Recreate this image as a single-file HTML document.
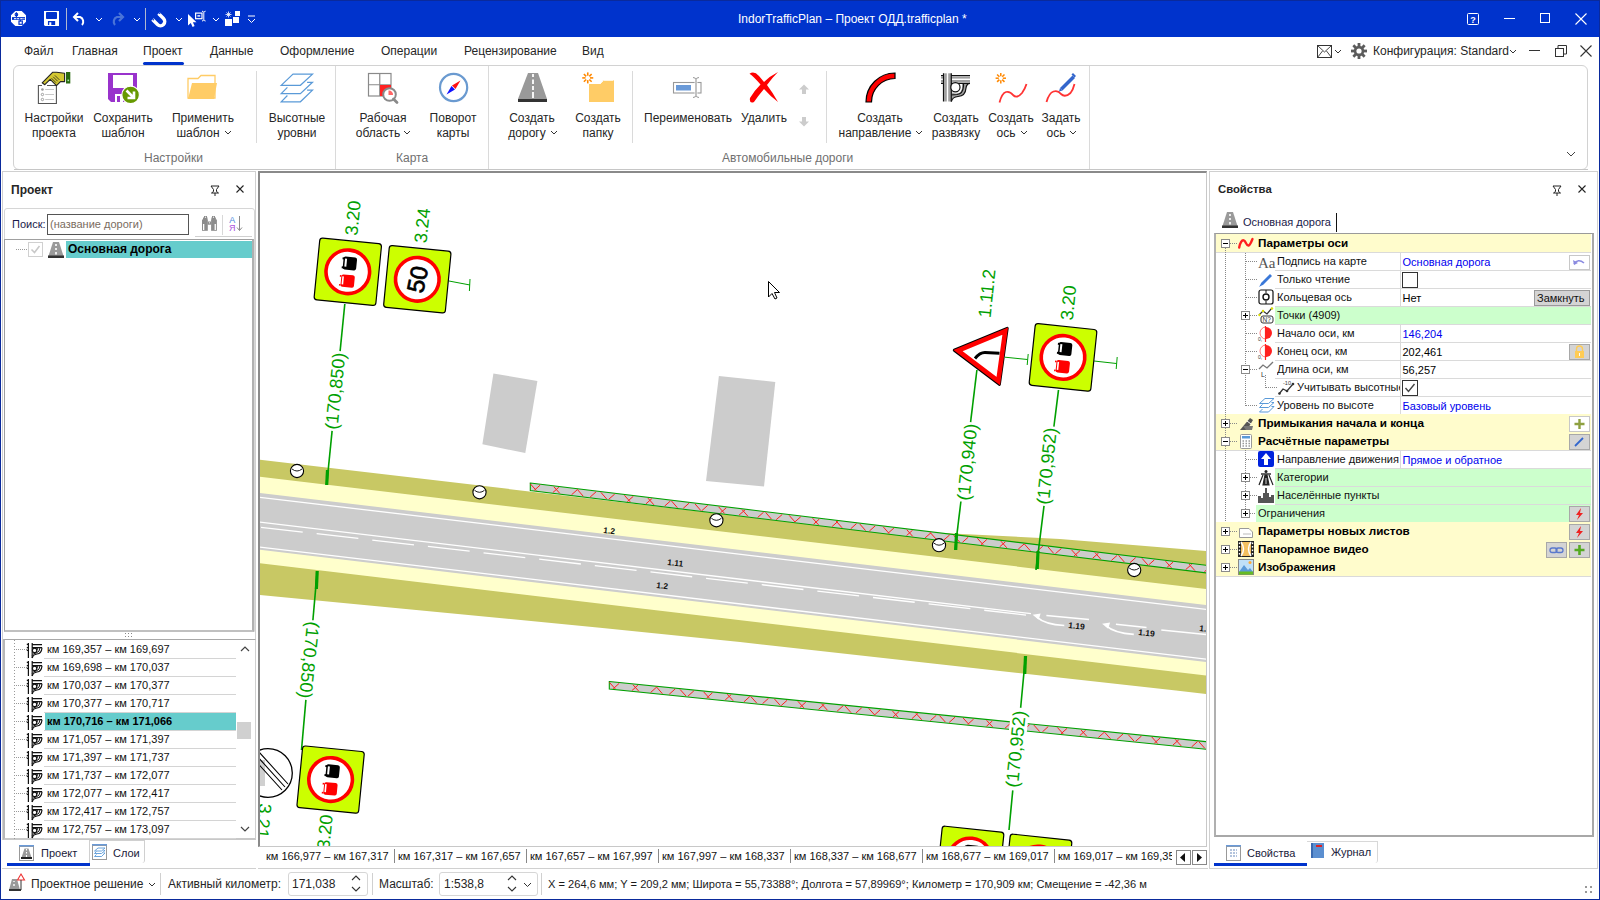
<!DOCTYPE html><html><head><meta charset="utf-8"><style>
html,body{margin:0;padding:0;width:1600px;height:900px;overflow:hidden;background:#fff;}
body{position:relative;font-family:"Liberation Sans",sans-serif;}
.t{position:absolute;white-space:nowrap;}
.r{position:absolute;}
.s{position:absolute;overflow:visible;}
</style></head><body>
<div class="r" style="left:0px;top:0px;width:1600px;height:37px;background:#0033cc;"></div>
<div class="r" style="left:0px;top:0px;width:1600px;height:1px;background:#0a2a9c;"></div>
<div class="r" style="left:0px;top:0px;width:1px;height:900px;background:#0a2a9c;"></div>
<div class="r" style="left:1599px;top:0px;width:1px;height:900px;background:#0a2a9c;"></div>
<div class="r" style="left:0px;top:899px;width:1600px;height:1px;background:#0a2a9c;"></div>
<svg class="s" style="left:11px;top:11px;" width="15" height="15" viewBox="0 0 15 15"><path d="M4.3 0 H10.7 L15 4.3 V10.7 L10.7 15 H4.3 L0 10.7 V4.3 Z" fill="#fff"/><rect x="1" y="6.1" width="13" height="2.8" fill="#0033cc"/><rect x="3" y="7.15" width="2.4" height="1.05" fill="#fff"/><rect x="6.1" y="7.15" width="2.1" height="1.05" fill="#fff"/><rect x="9.25" y="7.15" width="2.45" height="1.05" fill="#fff"/><rect x="12.4" y="7.15" width="1.1" height="1.05" fill="#fff"/><path d="M5.4 1.2 V6.1 M9.4 8.9 V10.5" stroke="#0033cc" stroke-width="1.1"/><circle cx="5.4" cy="3.5" r="1.3" fill="none" stroke="#0033cc" stroke-width="1.1"/><rect x="8" y="10" width="3.3" height="3.3" fill="none" stroke="#0033cc" stroke-width="1.2"/></svg>
<svg class="s" style="left:44px;top:11px;" width="15" height="15" viewBox="0 0 15 15"><path d="M0 0 H15 V15 H1 L0 14Z" fill="#fff"/><rect x="2" y="1" width="11" height="7" rx="0.8" fill="#0033cc"/><path d="M4.6 14 V10.6 H10.5 V14" fill="none" stroke="#0033cc" stroke-width="1.3"/><rect x="7.3" y="11" width="3" height="3" fill="#0033cc"/></svg>
<div class="r" style="left:66px;top:8px;width:1px;height:22px;background:#b0b8d0;"></div>
<svg class="s" style="left:73px;top:12px;" width="14" height="14" viewBox="0 0 14 14"><path d="M5 1 L1 5 L5 9" fill="none" stroke="#fff" stroke-width="2"/><path d="M1.5 5 H7 A5 5 0 0 1 9 13" fill="none" stroke="#fff" stroke-width="2"/></svg>
<svg class="s" style="left:95px;top:17px;" width="8" height="5" viewBox="0 0 8 5"><path d="M1 1 L4 4 L7 1" fill="none" stroke="#fff" stroke-width="1"/></svg>
<svg class="s" style="left:110px;top:12px;" width="14" height="14" viewBox="0 0 14 14"><path d="M9 1 L13 5 L9 9" fill="none" stroke="#4a74d8" stroke-width="2.2"/><path d="M12.5 5 H7 A5 5 0 0 0 5 13" fill="none" stroke="#4a74d8" stroke-width="2.2"/></svg>
<svg class="s" style="left:133px;top:17px;" width="8" height="5" viewBox="0 0 8 5"><path d="M1 1 L4 4 L7 1" fill="none" stroke="#fff" stroke-width="1"/></svg>
<div class="r" style="left:145px;top:8px;width:1px;height:22px;background:#b0b8d0;"></div>
<svg class="s" style="left:148px;top:8px;" width="22" height="22" viewBox="0 0 22 22"><path d="M4.5 11.5 L9.5 16.5 A4.24 4.24 0 0 0 15.5 10.5 L10.5 5.5" fill="none" stroke="#fff" stroke-width="3.4"/><circle cx="5.3" cy="11.7" r="0.75" fill="#0033cc"/><circle cx="11.7" cy="5.3" r="0.75" fill="#0033cc"/></svg>
<svg class="s" style="left:175px;top:17px;" width="8" height="5" viewBox="0 0 8 5"><path d="M1 1 L4 4 L7 1" fill="none" stroke="#fff" stroke-width="1"/></svg>
<svg class="s" style="left:186px;top:10px;" width="21" height="18" viewBox="0 0 21 18"><path d="M2 4 V15.5 L4.8 13 L6.6 17 L8.6 16 L6.9 12.3 L10.5 12.3Z" fill="#fff"/><rect x="9.6" y="3.1" width="6.4" height="5.6" fill="none" stroke="#fff" stroke-width="1.2"/><rect x="11.4" y="5.2" width="2.8" height="1.4" fill="#fff"/><path d="M16 1.2 Q17.4 1.2 17.8 2.4 Q18.2 1.2 19.6 1.2 M17.8 2.4 V9.8 M16 11 Q17.4 11 17.8 9.8 Q18.2 11 19.6 11" fill="none" stroke="#fff" stroke-width="1"/></svg>
<svg class="s" style="left:212px;top:17px;" width="8" height="5" viewBox="0 0 8 5"><path d="M1 1 L4 4 L7 1" fill="none" stroke="#fff" stroke-width="1"/></svg>
<svg class="s" style="left:225px;top:11px;" width="16" height="16" viewBox="0 0 16 16"><rect x="0" y="8" width="7" height="7" fill="#fff"/><rect x="8" y="6" width="6" height="6" fill="#fff"/><rect x="10" y="0" width="5" height="5" fill="#fff"/><path d="M3.5 0.5 V6.5 M0.5 3.5 H6.5 M1.5 1.5 L5.5 5.5 M5.5 1.5 L1.5 5.5" stroke="#fff" stroke-width="0.8"/></svg>
<svg class="s" style="left:247px;top:15px;" width="9" height="9" viewBox="0 0 9 9"><path d="M1 1 H8" stroke="#fff"/><path d="M1 4 L4.5 7.5 L8 4" fill="none" stroke="#fff"/></svg>
<div class="t" style="left:738px;top:13.00px;font-size:12px;line-height:12px;color:#ffffff;">IndorTrafficPlan – Проект ОДД.trafficplan *</div>
<svg class="s" style="left:1467px;top:13px;" width="12" height="12" viewBox="0 0 12 12"><rect x="0.5" y="0.5" width="11" height="11" fill="none" stroke="#fff" rx="1"/><text x="6" y="9.5" font-size="9" font-family="Liberation Sans" font-weight="700" fill="#fff" text-anchor="middle">?</text></svg>
<div class="r" style="left:1504px;top:18px;width:11px;height:1px;background:#fff;"></div>
<div class="r" style="left:1540px;top:13px;width:10px;height:10px;box-sizing:border-box;border:1px solid #fff;"></div>
<svg class="s" style="left:1575px;top:13px;" width="12" height="12" viewBox="0 0 12 12"><path d="M0.5 0.5 L11.5 11.5 M11.5 0.5 L0.5 11.5" stroke="#fff" stroke-width="1.1"/></svg>
<div class="t" style="left:24px;top:45.00px;font-size:12px;line-height:12px;color:#262626;">Файл</div>
<div class="t" style="left:72px;top:45.00px;font-size:12px;line-height:12px;color:#262626;">Главная</div>
<div class="t" style="left:143px;top:45.00px;font-size:12px;line-height:12px;color:#262626;">Проект</div>
<div class="t" style="left:210px;top:45.00px;font-size:12px;line-height:12px;color:#262626;">Данные</div>
<div class="t" style="left:280px;top:45.00px;font-size:12px;line-height:12px;color:#262626;">Оформление</div>
<div class="t" style="left:381px;top:45.00px;font-size:12px;line-height:12px;color:#262626;">Операции</div>
<div class="t" style="left:464px;top:45.00px;font-size:12px;line-height:12px;color:#262626;">Рецензирование</div>
<div class="t" style="left:582px;top:45.00px;font-size:12px;line-height:12px;color:#262626;">Вид</div>
<div class="r" style="left:143px;top:62px;width:41px;height:3px;background:#0033cc;border-radius:1.5px;"></div>
<svg class="s" style="left:1317px;top:45px;" width="15" height="13" viewBox="0 0 15 13"><rect x="0.5" y="0.5" width="14" height="12" fill="none" stroke="#333"/><path d="M0.5 0.5 L7.5 7 L14.5 0.5 M0.5 12.5 L5.5 6 M14.5 12.5 L9.5 6" fill="none" stroke="#333" stroke-width="0.9"/></svg>
<svg class="s" style="left:1334px;top:48.5px;" width="8" height="5" viewBox="0 0 8 5"><path d="M1 1 L4 4 L7 1" fill="none" stroke="#333" stroke-width="1"/></svg>
<svg class="s" style="left:1350.5px;top:42.5px;" width="16" height="16" viewBox="0 0 16 16"><g fill="#5c5c5c"><circle cx="8" cy="8" r="5.2"/><rect x="6.6" y="0" width="2.8" height="4" transform="rotate(0 8 8)"/><rect x="6.6" y="0" width="2.8" height="4" transform="rotate(45 8 8)"/><rect x="6.6" y="0" width="2.8" height="4" transform="rotate(90 8 8)"/><rect x="6.6" y="0" width="2.8" height="4" transform="rotate(135 8 8)"/><rect x="6.6" y="0" width="2.8" height="4" transform="rotate(180 8 8)"/><rect x="6.6" y="0" width="2.8" height="4" transform="rotate(225 8 8)"/><rect x="6.6" y="0" width="2.8" height="4" transform="rotate(270 8 8)"/><rect x="6.6" y="0" width="2.8" height="4" transform="rotate(315 8 8)"/></g><circle cx="8" cy="8" r="2.6" fill="#fff"/></svg>
<div class="t" style="left:1373px;top:45.00px;font-size:12px;line-height:12px;color:#262626;">Конфигурация: Standard</div>
<svg class="s" style="left:1509px;top:49px;" width="8" height="5" viewBox="0 0 8 5"><path d="M1 1 L4 4 L7 1" fill="none" stroke="#333" stroke-width="1"/></svg>
<div class="r" style="left:1529px;top:50px;width:11px;height:1px;background:#333;"></div>
<svg class="s" style="left:1555px;top:45px;" width="12" height="12" viewBox="0 0 12 12"><rect x="0.5" y="3.5" width="8" height="8" fill="none" stroke="#333"/><path d="M3 3.5 V0.5 H11.5 V9 H8.5" fill="none" stroke="#333"/></svg>
<svg class="s" style="left:1580px;top:45px;" width="12" height="12" viewBox="0 0 12 12"><path d="M0.5 0.5 L11.5 11.5 M11.5 0.5 L0.5 11.5" stroke="#333" stroke-width="1.1"/></svg>
<div class="r" style="left:13px;top:65px;width:1575px;height:105px;box-sizing:border-box;border:1px solid #d2d2d2;border-radius:6px;"></div>
<div class="r" style="left:14px;top:169px;width:1574px;height:1px;background:#c6c6c6;"></div>
<div class="t" style="left:144px;top:152.00px;font-size:12px;line-height:12px;color:#707070;">Настройки</div>
<div class="t" style="left:396px;top:152.00px;font-size:12px;line-height:12px;color:#707070;">Карта</div>
<div class="t" style="left:722px;top:152.00px;font-size:12px;line-height:12px;color:#707070;">Автомобильные дороги</div>
<div class="r" style="left:256px;top:71px;width:1px;height:72px;background:#dadada;"></div>
<div class="r" style="left:632px;top:71px;width:1px;height:72px;background:#dadada;"></div>
<div class="r" style="left:826px;top:71px;width:1px;height:72px;background:#dadada;"></div>
<div class="r" style="left:335px;top:66px;width:1px;height:103px;background:#dadada;"></div>
<div class="r" style="left:488px;top:66px;width:1px;height:103px;background:#dadada;"></div>
<div class="r" style="left:1089px;top:66px;width:1px;height:103px;background:#dadada;"></div>
<div class="t" style="left:54px;top:112.00px;font-size:12px;line-height:12px;color:#262626;transform:translateX(-50%);">Настройки</div>
<div class="t" style="left:54px;top:127.00px;font-size:12px;line-height:12px;color:#262626;transform:translateX(-50%);">проекта</div>
<div class="t" style="left:123px;top:112.00px;font-size:12px;line-height:12px;color:#262626;transform:translateX(-50%);">Сохранить</div>
<div class="t" style="left:123px;top:127.00px;font-size:12px;line-height:12px;color:#262626;transform:translateX(-50%);">шаблон</div>
<div class="t" style="left:203px;top:112.00px;font-size:12px;line-height:12px;color:#262626;transform:translateX(-50%);">Применить</div>
<div class="t" style="left:198px;top:127.00px;font-size:12px;line-height:12px;color:#262626;transform:translateX(-50%);">шаблон</div>
<svg class="s" style="left:224px;top:130px;" width="8" height="5" viewBox="0 0 8 5"><path d="M1 1 L4 4 L7 1" fill="none" stroke="#333" stroke-width="1"/></svg>
<div class="t" style="left:297px;top:112.00px;font-size:12px;line-height:12px;color:#262626;transform:translateX(-50%);">Высотные</div>
<div class="t" style="left:297px;top:127.00px;font-size:12px;line-height:12px;color:#262626;transform:translateX(-50%);">уровни</div>
<div class="t" style="left:383px;top:112.00px;font-size:12px;line-height:12px;color:#262626;transform:translateX(-50%);">Рабочая</div>
<div class="t" style="left:378px;top:127.00px;font-size:12px;line-height:12px;color:#262626;transform:translateX(-50%);">область</div>
<svg class="s" style="left:403px;top:130px;" width="8" height="5" viewBox="0 0 8 5"><path d="M1 1 L4 4 L7 1" fill="none" stroke="#333" stroke-width="1"/></svg>
<div class="t" style="left:453px;top:112.00px;font-size:12px;line-height:12px;color:#262626;transform:translateX(-50%);">Поворот</div>
<div class="t" style="left:453px;top:127.00px;font-size:12px;line-height:12px;color:#262626;transform:translateX(-50%);">карты</div>
<div class="t" style="left:532px;top:112.00px;font-size:12px;line-height:12px;color:#262626;transform:translateX(-50%);">Создать</div>
<div class="t" style="left:527px;top:127.00px;font-size:12px;line-height:12px;color:#262626;transform:translateX(-50%);">дорогу</div>
<svg class="s" style="left:550px;top:130px;" width="8" height="5" viewBox="0 0 8 5"><path d="M1 1 L4 4 L7 1" fill="none" stroke="#333" stroke-width="1"/></svg>
<div class="t" style="left:598px;top:112.00px;font-size:12px;line-height:12px;color:#262626;transform:translateX(-50%);">Создать</div>
<div class="t" style="left:598px;top:127.00px;font-size:12px;line-height:12px;color:#262626;transform:translateX(-50%);">папку</div>
<div class="t" style="left:688px;top:112.00px;font-size:12px;line-height:12px;color:#262626;transform:translateX(-50%);">Переименовать</div>
<div class="t" style="left:764px;top:112.00px;font-size:12px;line-height:12px;color:#262626;transform:translateX(-50%);">Удалить</div>
<div class="t" style="left:880px;top:112.00px;font-size:12px;line-height:12px;color:#262626;transform:translateX(-50%);">Создать</div>
<div class="t" style="left:875px;top:127.00px;font-size:12px;line-height:12px;color:#262626;transform:translateX(-50%);">направление</div>
<svg class="s" style="left:915px;top:130px;" width="8" height="5" viewBox="0 0 8 5"><path d="M1 1 L4 4 L7 1" fill="none" stroke="#333" stroke-width="1"/></svg>
<div class="t" style="left:956px;top:112.00px;font-size:12px;line-height:12px;color:#262626;transform:translateX(-50%);">Создать</div>
<div class="t" style="left:956px;top:127.00px;font-size:12px;line-height:12px;color:#262626;transform:translateX(-50%);">развязку</div>
<div class="t" style="left:1011px;top:112.00px;font-size:12px;line-height:12px;color:#262626;transform:translateX(-50%);">Создать</div>
<div class="t" style="left:1006px;top:127.00px;font-size:12px;line-height:12px;color:#262626;transform:translateX(-50%);">ось</div>
<svg class="s" style="left:1020px;top:130px;" width="8" height="5" viewBox="0 0 8 5"><path d="M1 1 L4 4 L7 1" fill="none" stroke="#333" stroke-width="1"/></svg>
<div class="t" style="left:1061px;top:112.00px;font-size:12px;line-height:12px;color:#262626;transform:translateX(-50%);">Задать</div>
<div class="t" style="left:1056px;top:127.00px;font-size:12px;line-height:12px;color:#262626;transform:translateX(-50%);">ось</div>
<svg class="s" style="left:1069px;top:130px;" width="8" height="5" viewBox="0 0 8 5"><path d="M1 1 L4 4 L7 1" fill="none" stroke="#333" stroke-width="1"/></svg>
<svg class="s" style="left:1566px;top:151px;" width="10" height="6" viewBox="0 0 10 6"><path d="M1 1 L5 5 L9 1" fill="none" stroke="#444" stroke-width="1"/></svg>
<svg class="s" style="left:36px;top:70px;" width="36" height="36" viewBox="0 0 36 36"><rect x="2.4" y="15.5" width="18" height="18" fill="#fff"/><path d="M6 15.5 H2.4 V33.5 H20.4 V15.5 H11" fill="none" stroke="#555" stroke-width="1.1"/><circle cx="6.45" cy="19.5" r="1.3" fill="#999"/><circle cx="6.45" cy="24.5" r="1.2" fill="none" stroke="#888" stroke-width="0.8"/><circle cx="6.45" cy="29.5" r="1.2" fill="none" stroke="#888" stroke-width="0.8"/><path d="M9.2 19.5 H18 M9.2 24.5 H18 M9.2 29.5 H18" stroke="#c8c8c8" stroke-width="1"/><path d="M6.2 12.8 L16.8 2.2 H20.5 L28.6 3.3 V11.6 H24.5 L20.5 15.6 L14.2 9.3 L8.8 14.7Z" fill="#d4c832" stroke="#222" stroke-width="1.1" stroke-linejoin="round"/><path d="M15.5 8.2 L20 12.7 M17.2 6.8 L21.7 11.3 M18.9 5.4 L23.4 9.9" stroke="#222" stroke-width="0.8"/><rect x="30" y="2" width="4.3" height="11.5" fill="#2a6a10"/><rect x="31.5" y="9.6" width="1.6" height="1.6" fill="#aeeaae"/></svg>
<svg class="s" style="left:106px;top:71px;" width="36" height="36" viewBox="0 0 36 36"><path d="M2 2 H31 V24 L26 31 H5 L2 28Z" fill="#9933cc"/><rect x="7" y="4" width="20" height="13" fill="#fff"/><rect x="9" y="23" width="8" height="8" fill="#fff"/><rect x="11" y="25" width="3" height="6" fill="#9933cc"/><circle cx="24.6" cy="23.9" r="8.8" fill="#669900" stroke="#fff" stroke-width="1.2"/><path d="M20.5 19.5 L27.5 26.5 M28 20.5 V27 H21.5" fill="none" stroke="#fff" stroke-width="2.6"/></svg>
<svg class="s" style="left:186px;top:74px;" width="34" height="28" viewBox="0 0 34 28"><path d="M2 4.5 H12 L15 1.5 H29 V24 H2Z" fill="#fff" stroke="#ffcc66" stroke-width="1.3"/><path d="M2 25 L6 9 H31 L28 25Z" fill="#ffcc66"/></svg>
<svg class="s" style="left:280px;top:73px;" width="34" height="30" viewBox="0 0 34 30"><g fill="none" stroke="#5a9ad8" stroke-width="1.2"><path d="M13 1.1 H32.5 L20.4 12.3 H1.2Z"/><path d="M27.1 9.3 H32.5 L20.4 20.6 H1.2 L7.4 14.4"/><path d="M27.1 17.2 H32.5 L20.4 28.8 H1.2 L7.4 22.5"/></g></svg>
<svg class="s" style="left:366px;top:71px;" width="34" height="34" viewBox="0 0 34 34"><g fill="none" stroke="#8a8a8a" stroke-width="1.2"><rect x="2.5" y="2.5" width="22.5" height="22.5"/><path d="M13.75 2.5 V25 M2.5 13.75 H25"/></g><rect x="14" y="14" width="11" height="11" fill="#ff2222"/><circle cx="23.5" cy="23.5" r="6.3" fill="#fff" stroke="#8a8a8a" stroke-width="2"/><path d="M22.5 19.5 A4 4 0 0 1 27 24 H22.5Z" fill="#ff6666"/><path d="M27.5 28 L31 31.5" stroke="#8a8a8a" stroke-width="2.8" stroke-linecap="round"/></svg>
<svg class="s" style="left:437px;top:71px;" width="34" height="34" viewBox="0 0 34 34"><circle cx="16.6" cy="16.5" r="13.6" fill="#fff" stroke="#6a9ad0" stroke-width="2.2"/><path d="M23.5 9.5 L18.5 18 L15 14.5Z" fill="#ff1111"/><path d="M9.5 23.5 L14.5 15 L18 18.5Z" fill="#1111ff"/></svg>
<svg class="s" style="left:516px;top:71px;" width="34" height="34" viewBox="0 0 34 34"><path d="M12 2 H22 L31 28 H2Z" fill="#999"/><rect x="2" y="28" width="29" height="3" fill="#333"/><path d="M17 3 V6 M17 8.5 V13 M17 15 V19 M17 21 V27" stroke="#fff" stroke-width="1.8"/></svg>
<svg class="s" style="left:580px;top:71px;" width="36" height="34" viewBox="0 0 36 34"><g stroke="#ff8800" stroke-width="1.6"><line x1="9.95" y1="6.90" x2="13.25" y2="6.90"/><line x1="9.31" y1="8.46" x2="11.64" y2="10.79"/><line x1="7.75" y1="9.10" x2="7.75" y2="12.40"/><line x1="6.19" y1="8.46" x2="3.86" y2="10.79"/><line x1="5.55" y1="6.90" x2="2.25" y2="6.90"/><line x1="6.19" y1="5.34" x2="3.86" y2="3.01"/><line x1="7.75" y1="4.70" x2="7.75" y2="1.40"/><line x1="9.31" y1="5.34" x2="11.64" y2="3.01"/></g><path d="M9 13 H20 L23.5 9 H34 V31 H9Z" fill="#ffcc66"/><path d="M20 13 L23.5 9.5 H33.5" fill="none" stroke="#fff" stroke-width="0.8"/></svg>
<svg class="s" style="left:671px;top:76px;" width="34" height="24" viewBox="0 0 34 24"><rect x="2.5" y="6.5" width="27.5" height="10.5" fill="#fff" stroke="#999" stroke-width="1.1"/><rect x="5" y="9" width="15" height="5.5" fill="#6a9ad8"/><path d="M22 1.5 Q25 1.5 25 4 V19 Q25 21.5 22 21.5 M28 1.5 Q25 1.5 25 4 V19 Q25 21.5 28 21.5" fill="none" stroke="#999" stroke-width="1"/><rect x="23.6" y="3" width="2.8" height="17" fill="#fff"/><path d="M25 3 V20" stroke="#999" stroke-width="1.2"/></svg>
<svg class="s" style="left:746px;top:71px;" width="34" height="34" viewBox="0 0 34 34"><path d="M3.5 2.8 Q8 -0.5 13 5 Q16 8.5 18 11 Q24 5 32 1 Q26 7 21 14 Q27 22 32 31 Q25 26 18 18 Q12 25 8 31 Q3 33 4 27 Q8 20 14.5 13.5 Q8 6 3.5 2.8Z" fill="#ff0000"/></svg>
<svg class="s" style="left:799px;top:84px;" width="11" height="11" viewBox="0 0 11 11"><path d="M5 0.5 L10 5.5 H7 V10 H3 V5.5 H0Z" fill="#cccccc"/></svg>
<svg class="s" style="left:799px;top:116px;" width="11" height="11" viewBox="0 0 11 11"><path d="M5 10.5 L10 5.5 H7 V1 H3 V5.5 H0Z" fill="#cccccc"/></svg>
<svg class="s" style="left:864px;top:71px;" width="34" height="34" viewBox="0 0 34 34"><path d="M2 31 A29 29 0 0 1 31 2 V7.5 A23.5 23.5 0 0 0 7.5 31Z" fill="#ff0000" stroke="#000" stroke-width="1.2"/></svg>
<svg class="s" style="left:936px;top:68px;" width="40" height="38" viewBox="0 0 40 38"><rect x="8.2" y="5.3" width="2.6" height="28.2" fill="#a0a0a0"/><rect x="12.2" y="5.3" width="2.8" height="28.2" fill="#a0a0a0"/><rect x="5" y="8.2" width="2.5" height="2.4" fill="#a0a0a0"/><rect x="5" y="12" width="2.5" height="2.3" fill="#a0a0a0"/><rect x="15.5" y="8.2" width="18.5" height="2.4" fill="#a0a0a0"/><rect x="15.5" y="12" width="18.5" height="2.3" fill="#a0a0a0"/><path d="M15.3 33.5 Q16.5 29 22 28.5 Q29.5 28 30 20 Q30.5 15.5 34 15.3 H26 V20 Q25.5 25.5 20 25.5 Q15.3 25.5 15.3 22Z" fill="#a0a0a0"/><g fill="none" stroke="#111" stroke-width="1.2"><path d="M7.5 5.3 V33.5 M15.3 5.3 V33.5 M5 7.5 H7.5 M15.3 7.5 H34 M5 15.3 H7.5 M15.3 15.3 H34"/><circle cx="19.4" cy="19.2" r="4.6" fill="#fff"/><path d="M15.3 33.5 Q16.5 29 22 28.5 Q29.5 28 30 20 Q30.5 15.5 34 15.3"/><path d="M15.3 27 Q17 26.5 21 26.5 Q27 26 27.5 18 V15.3"/></g></svg>
<svg class="s" style="left:993px;top:71px;" width="36" height="34" viewBox="0 0 36 34"><g stroke="#ff8800" stroke-width="1.5"><line x1="9.80" y1="7.20" x2="13.00" y2="7.20"/><line x1="9.21" y1="8.61" x2="11.48" y2="10.88"/><line x1="7.80" y1="9.20" x2="7.80" y2="12.40"/><line x1="6.39" y1="8.61" x2="4.12" y2="10.88"/><line x1="5.80" y1="7.20" x2="2.60" y2="7.20"/><line x1="6.39" y1="5.79" x2="4.12" y2="3.52"/><line x1="7.80" y1="5.20" x2="7.80" y2="2.00"/><line x1="9.21" y1="5.79" x2="11.48" y2="3.52"/></g><path d="M6.5 31.5 Q9 22 13 21 Q17 20 20 24 Q24 28 29 22 Q32 18 33.5 13" fill="none" stroke="#ff3333" stroke-width="1.8"/></svg>
<svg class="s" style="left:1044px;top:71px;" width="34" height="34" viewBox="0 0 34 34"><path d="M2.5 31 Q5 22 9.5 20.5 Q14 19 17 23 Q21 27 26.5 22 Q29 19 30.5 13" fill="none" stroke="#ff3333" stroke-width="1.8"/><path d="M16 17 L28.5 4.5 L31 7 L18.5 19.5Z" fill="#3366cc"/><path d="M16 17 L15 20.5 L18.5 19.5Z" fill="#3366cc"/><path d="M27.5 3.5 L29 2 L32 5 L30.5 6.5Z" fill="#3366cc"/></svg>
<div class="r" style="left:2px;top:171px;width:254px;height:698px;box-sizing:border-box;border:1px solid #d0d0d0;border-bottom:none;"></div>
<div class="t" style="left:11px;top:184.00px;font-size:12px;line-height:12px;color:#262626;font-weight:700;">Проект</div>
<svg class="s" style="left:210px;top:185px;" width="10" height="11" viewBox="0 0 10 11"><path d="M1 1 H9 L6.5 4.5 V6.5 L8.5 8 H1.5 L3.5 6.5 V4.5Z M5 8 V11" fill="none" stroke="#222" stroke-width="1"/></svg>
<svg class="s" style="left:236px;top:185px;" width="8" height="8" viewBox="0 0 8 8"><path d="M0.5 0.5 L7.5 7.5 M7.5 0.5 L0.5 7.5" stroke="#222" stroke-width="1.1"/></svg>
<div class="r" style="left:4px;top:208px;width:251px;height:424px;box-sizing:border-box;border:1px solid #d6d6d6;border-radius:3px 3px 0 0;"></div>
<div class="t" style="left:12px;top:218.50px;font-size:11px;line-height:11px;color:#1a1a4a;">Поиск:</div>
<div class="r" style="left:47px;top:214px;width:142px;height:21px;background:#fff;box-sizing:border-box;border:1px solid #555;"></div>
<div class="t" style="left:50px;top:218.50px;font-size:11px;line-height:11px;color:#7a6c60;">(название дороги)</div>
<svg class="s" style="left:201px;top:215px;" width="17" height="17" viewBox="0 0 17 17"><g fill="#8c8c8c"><rect x="1" y="4.5" width="5.8" height="11.3"/><rect x="2" y="2.5" width="4.5" height="3"/><rect x="3" y="1" width="3" height="2"/><rect x="10.1" y="4.5" width="5.8" height="11.3"/><rect x="10.4" y="2.5" width="4.5" height="3"/><rect x="11" y="1" width="3" height="2"/><rect x="6.7" y="6.5" width="3.5" height="3.2"/></g><rect x="2" y="9" width="1.3" height="6" fill="#fff"/><rect x="13.6" y="9" width="1.3" height="6" fill="#fff"/><circle cx="4.5" cy="2.2" r="0.6" fill="#fff"/><circle cx="12.5" cy="2.2" r="0.6" fill="#fff"/><circle cx="8.5" cy="7.8" r="0.6" fill="#fff"/></svg>
<div class="r" style="left:222px;top:215px;width:1px;height:20px;background:#d8d8d8;"></div>
<div class="r" style="left:195px;top:236px;width:57px;height:1px;background:#d0d0d0;"></div>
<svg class="s" style="left:229px;top:215px;" width="15" height="17" viewBox="0 0 15 17"><text x="3.3" y="7.8" font-size="9" font-family="Liberation Sans" fill="#4a88dd" text-anchor="middle">A</text><text x="3.3" y="15.8" font-size="9" font-family="Liberation Sans" fill="#aa55dd" text-anchor="middle">Я</text><path d="M10.5 1 V15.5 M8 12.5 L10.5 15.5 L13 12.5" fill="none" stroke="#8a8a8a" stroke-width="1"/></svg>
<div class="r" style="left:4px;top:239px;width:250px;height:393px;box-sizing:border-box;border:1px solid #a0a0a0;border-right:2px solid #b0b0b0;border-bottom:2px solid #c0c0c0;"></div>
<svg class="s" style="left:16px;top:249px;" width="12" height="1" viewBox="0 0 12 1"><path d="M0 0.5 H12" stroke="#999" stroke-dasharray="1 1"/></svg>
<div class="r" style="left:28px;top:242px;width:15px;height:15px;background:#fff;box-sizing:border-box;border:1px solid #d0d0d0;"></div>
<svg class="s" style="left:30px;top:244px;" width="11" height="11" viewBox="0 0 11 11"><path d="M1.5 5.5 L4.5 8.5 L9.5 2" fill="none" stroke="#c8c8c8" stroke-width="1.6"/></svg>
<svg class="s" style="left:48px;top:242px;" width="16" height="16" viewBox="0 0 16 16"><path d="M5 0 H11 L15.5 14 H0.5Z" fill="#9a9a9a"/><rect x="0" y="13.5" width="16" height="2.5" fill="#333"/><path d="M8 2 V4 M8 6 V8 M8 10 V12.5" stroke="#fff" stroke-width="1.6"/></svg>
<div class="r" style="left:66px;top:241px;width:186px;height:17px;background:#66cccc;"></div>
<div class="t" style="left:68px;top:243.00px;font-size:12px;line-height:12px;color:#000;font-weight:700;">Основная дорога</div>
<svg class="s" style="left:124px;top:632px;" width="10" height="6" viewBox="0 0 10 6"><rect x="1" y="1" width="1" height="1" fill="#888"/><rect x="1" y="4" width="1" height="1" fill="#888"/><rect x="4" y="1" width="1" height="1" fill="#888"/><rect x="4" y="4" width="1" height="1" fill="#888"/><rect x="7" y="1" width="1" height="1" fill="#888"/><rect x="7" y="4" width="1" height="1" fill="#888"/></svg>
<div class="r" style="left:3px;top:639px;width:253px;height:201px;box-sizing:border-box;border:1px solid #a8a8a8;border-left:2px solid #b8b8b8;border-bottom:2px solid #c8c8c8;border-right:1px solid #d0d0d0;"></div>
<svg class="s" style="left:14px;top:640px;" width="1" height="200" viewBox="0 0 1 200"><path d="M0.5 0 V200" stroke="#999" stroke-dasharray="1 2"/></svg>
<svg class="s" style="left:16px;top:649px;" width="11" height="1" viewBox="0 0 11 1"><path d="M0 0.5 H11" stroke="#999" stroke-dasharray="1 1"/></svg>
<svg class="s" style="left:26px;top:642px;" width="17" height="17" viewBox="0 0 17 17"><g fill="none" stroke="#111" stroke-width="1.2"><path d="M2.4 1 V16 M6.2 1 V16 M0.8 2.3 H2.4 M0.8 5.6 H2.4 M0.8 8.4 H2.4 M6.2 2.6 H16 M6.2 5.7 H16"/><circle cx="8.6" cy="8.4" r="2.2"/><path d="M6.2 16 Q7 12.5 11 12 Q15.5 11.5 16 5.7"/><path d="M6.2 13.4 Q7.5 11.2 10.5 10.8 Q13.6 10.2 14 5.7" stroke-width="1"/><path d="M10.8 8.4 Q11.5 6.5 12 5.7" stroke-width="1"/></g><rect x="6.8" y="11" width="1.2" height="2" fill="#777"/></svg>
<div class="t" style="left:47px;top:643.50px;font-size:11px;line-height:11px;color:#111;">км 169,357 – км 169,697</div>
<div class="r" style="left:44px;top:658px;width:192px;height:1px;background:#d4d4d4;"></div>
<svg class="s" style="left:16px;top:667px;" width="11" height="1" viewBox="0 0 11 1"><path d="M0 0.5 H11" stroke="#999" stroke-dasharray="1 1"/></svg>
<svg class="s" style="left:26px;top:660px;" width="17" height="17" viewBox="0 0 17 17"><g fill="none" stroke="#111" stroke-width="1.2"><path d="M2.4 1 V16 M6.2 1 V16 M0.8 2.3 H2.4 M0.8 5.6 H2.4 M0.8 8.4 H2.4 M6.2 2.6 H16 M6.2 5.7 H16"/><circle cx="8.6" cy="8.4" r="2.2"/><path d="M6.2 16 Q7 12.5 11 12 Q15.5 11.5 16 5.7"/><path d="M6.2 13.4 Q7.5 11.2 10.5 10.8 Q13.6 10.2 14 5.7" stroke-width="1"/><path d="M10.8 8.4 Q11.5 6.5 12 5.7" stroke-width="1"/></g><rect x="6.8" y="11" width="1.2" height="2" fill="#777"/></svg>
<div class="t" style="left:47px;top:661.50px;font-size:11px;line-height:11px;color:#111;">км 169,698 – км 170,037</div>
<div class="r" style="left:44px;top:676px;width:192px;height:1px;background:#d4d4d4;"></div>
<svg class="s" style="left:16px;top:685px;" width="11" height="1" viewBox="0 0 11 1"><path d="M0 0.5 H11" stroke="#999" stroke-dasharray="1 1"/></svg>
<svg class="s" style="left:26px;top:678px;" width="17" height="17" viewBox="0 0 17 17"><g fill="none" stroke="#111" stroke-width="1.2"><path d="M2.4 1 V16 M6.2 1 V16 M0.8 2.3 H2.4 M0.8 5.6 H2.4 M0.8 8.4 H2.4 M6.2 2.6 H16 M6.2 5.7 H16"/><circle cx="8.6" cy="8.4" r="2.2"/><path d="M6.2 16 Q7 12.5 11 12 Q15.5 11.5 16 5.7"/><path d="M6.2 13.4 Q7.5 11.2 10.5 10.8 Q13.6 10.2 14 5.7" stroke-width="1"/><path d="M10.8 8.4 Q11.5 6.5 12 5.7" stroke-width="1"/></g><rect x="6.8" y="11" width="1.2" height="2" fill="#777"/></svg>
<div class="t" style="left:47px;top:679.50px;font-size:11px;line-height:11px;color:#111;">км 170,037 – км 170,377</div>
<div class="r" style="left:44px;top:694px;width:192px;height:1px;background:#d4d4d4;"></div>
<svg class="s" style="left:16px;top:703px;" width="11" height="1" viewBox="0 0 11 1"><path d="M0 0.5 H11" stroke="#999" stroke-dasharray="1 1"/></svg>
<svg class="s" style="left:26px;top:696px;" width="17" height="17" viewBox="0 0 17 17"><g fill="none" stroke="#111" stroke-width="1.2"><path d="M2.4 1 V16 M6.2 1 V16 M0.8 2.3 H2.4 M0.8 5.6 H2.4 M0.8 8.4 H2.4 M6.2 2.6 H16 M6.2 5.7 H16"/><circle cx="8.6" cy="8.4" r="2.2"/><path d="M6.2 16 Q7 12.5 11 12 Q15.5 11.5 16 5.7"/><path d="M6.2 13.4 Q7.5 11.2 10.5 10.8 Q13.6 10.2 14 5.7" stroke-width="1"/><path d="M10.8 8.4 Q11.5 6.5 12 5.7" stroke-width="1"/></g><rect x="6.8" y="11" width="1.2" height="2" fill="#777"/></svg>
<div class="t" style="left:47px;top:697.50px;font-size:11px;line-height:11px;color:#111;">км 170,377 – км 170,717</div>
<div class="r" style="left:44px;top:712px;width:192px;height:1px;background:#d4d4d4;"></div>
<svg class="s" style="left:16px;top:721px;" width="11" height="1" viewBox="0 0 11 1"><path d="M0 0.5 H11" stroke="#999" stroke-dasharray="1 1"/></svg>
<svg class="s" style="left:26px;top:714px;" width="17" height="17" viewBox="0 0 17 17"><g fill="none" stroke="#111" stroke-width="1.2"><path d="M2.4 1 V16 M6.2 1 V16 M0.8 2.3 H2.4 M0.8 5.6 H2.4 M0.8 8.4 H2.4 M6.2 2.6 H16 M6.2 5.7 H16"/><circle cx="8.6" cy="8.4" r="2.2"/><path d="M6.2 16 Q7 12.5 11 12 Q15.5 11.5 16 5.7"/><path d="M6.2 13.4 Q7.5 11.2 10.5 10.8 Q13.6 10.2 14 5.7" stroke-width="1"/><path d="M10.8 8.4 Q11.5 6.5 12 5.7" stroke-width="1"/></g><rect x="6.8" y="11" width="1.2" height="2" fill="#777"/></svg>
<div class="r" style="left:45px;top:713px;width:191px;height:17px;background:#66cccc;"></div>
<div class="t" style="left:47px;top:715.50px;font-size:11px;line-height:11px;color:#000;font-weight:700;">км 170,716 – км 171,066</div>
<div class="r" style="left:44px;top:730px;width:192px;height:1px;background:#d4d4d4;"></div>
<svg class="s" style="left:16px;top:739px;" width="11" height="1" viewBox="0 0 11 1"><path d="M0 0.5 H11" stroke="#999" stroke-dasharray="1 1"/></svg>
<svg class="s" style="left:26px;top:732px;" width="17" height="17" viewBox="0 0 17 17"><g fill="none" stroke="#111" stroke-width="1.2"><path d="M2.4 1 V16 M6.2 1 V16 M0.8 2.3 H2.4 M0.8 5.6 H2.4 M0.8 8.4 H2.4 M6.2 2.6 H16 M6.2 5.7 H16"/><circle cx="8.6" cy="8.4" r="2.2"/><path d="M6.2 16 Q7 12.5 11 12 Q15.5 11.5 16 5.7"/><path d="M6.2 13.4 Q7.5 11.2 10.5 10.8 Q13.6 10.2 14 5.7" stroke-width="1"/><path d="M10.8 8.4 Q11.5 6.5 12 5.7" stroke-width="1"/></g><rect x="6.8" y="11" width="1.2" height="2" fill="#777"/></svg>
<div class="t" style="left:47px;top:733.50px;font-size:11px;line-height:11px;color:#111;">км 171,057 – км 171,397</div>
<div class="r" style="left:44px;top:748px;width:192px;height:1px;background:#d4d4d4;"></div>
<svg class="s" style="left:16px;top:757px;" width="11" height="1" viewBox="0 0 11 1"><path d="M0 0.5 H11" stroke="#999" stroke-dasharray="1 1"/></svg>
<svg class="s" style="left:26px;top:750px;" width="17" height="17" viewBox="0 0 17 17"><g fill="none" stroke="#111" stroke-width="1.2"><path d="M2.4 1 V16 M6.2 1 V16 M0.8 2.3 H2.4 M0.8 5.6 H2.4 M0.8 8.4 H2.4 M6.2 2.6 H16 M6.2 5.7 H16"/><circle cx="8.6" cy="8.4" r="2.2"/><path d="M6.2 16 Q7 12.5 11 12 Q15.5 11.5 16 5.7"/><path d="M6.2 13.4 Q7.5 11.2 10.5 10.8 Q13.6 10.2 14 5.7" stroke-width="1"/><path d="M10.8 8.4 Q11.5 6.5 12 5.7" stroke-width="1"/></g><rect x="6.8" y="11" width="1.2" height="2" fill="#777"/></svg>
<div class="t" style="left:47px;top:751.50px;font-size:11px;line-height:11px;color:#111;">км 171,397 – км 171,737</div>
<div class="r" style="left:44px;top:766px;width:192px;height:1px;background:#d4d4d4;"></div>
<svg class="s" style="left:16px;top:775px;" width="11" height="1" viewBox="0 0 11 1"><path d="M0 0.5 H11" stroke="#999" stroke-dasharray="1 1"/></svg>
<svg class="s" style="left:26px;top:768px;" width="17" height="17" viewBox="0 0 17 17"><g fill="none" stroke="#111" stroke-width="1.2"><path d="M2.4 1 V16 M6.2 1 V16 M0.8 2.3 H2.4 M0.8 5.6 H2.4 M0.8 8.4 H2.4 M6.2 2.6 H16 M6.2 5.7 H16"/><circle cx="8.6" cy="8.4" r="2.2"/><path d="M6.2 16 Q7 12.5 11 12 Q15.5 11.5 16 5.7"/><path d="M6.2 13.4 Q7.5 11.2 10.5 10.8 Q13.6 10.2 14 5.7" stroke-width="1"/><path d="M10.8 8.4 Q11.5 6.5 12 5.7" stroke-width="1"/></g><rect x="6.8" y="11" width="1.2" height="2" fill="#777"/></svg>
<div class="t" style="left:47px;top:769.50px;font-size:11px;line-height:11px;color:#111;">км 171,737 – км 172,077</div>
<div class="r" style="left:44px;top:784px;width:192px;height:1px;background:#d4d4d4;"></div>
<svg class="s" style="left:16px;top:793px;" width="11" height="1" viewBox="0 0 11 1"><path d="M0 0.5 H11" stroke="#999" stroke-dasharray="1 1"/></svg>
<svg class="s" style="left:26px;top:786px;" width="17" height="17" viewBox="0 0 17 17"><g fill="none" stroke="#111" stroke-width="1.2"><path d="M2.4 1 V16 M6.2 1 V16 M0.8 2.3 H2.4 M0.8 5.6 H2.4 M0.8 8.4 H2.4 M6.2 2.6 H16 M6.2 5.7 H16"/><circle cx="8.6" cy="8.4" r="2.2"/><path d="M6.2 16 Q7 12.5 11 12 Q15.5 11.5 16 5.7"/><path d="M6.2 13.4 Q7.5 11.2 10.5 10.8 Q13.6 10.2 14 5.7" stroke-width="1"/><path d="M10.8 8.4 Q11.5 6.5 12 5.7" stroke-width="1"/></g><rect x="6.8" y="11" width="1.2" height="2" fill="#777"/></svg>
<div class="t" style="left:47px;top:787.50px;font-size:11px;line-height:11px;color:#111;">км 172,077 – км 172,417</div>
<div class="r" style="left:44px;top:802px;width:192px;height:1px;background:#d4d4d4;"></div>
<svg class="s" style="left:16px;top:811px;" width="11" height="1" viewBox="0 0 11 1"><path d="M0 0.5 H11" stroke="#999" stroke-dasharray="1 1"/></svg>
<svg class="s" style="left:26px;top:804px;" width="17" height="17" viewBox="0 0 17 17"><g fill="none" stroke="#111" stroke-width="1.2"><path d="M2.4 1 V16 M6.2 1 V16 M0.8 2.3 H2.4 M0.8 5.6 H2.4 M0.8 8.4 H2.4 M6.2 2.6 H16 M6.2 5.7 H16"/><circle cx="8.6" cy="8.4" r="2.2"/><path d="M6.2 16 Q7 12.5 11 12 Q15.5 11.5 16 5.7"/><path d="M6.2 13.4 Q7.5 11.2 10.5 10.8 Q13.6 10.2 14 5.7" stroke-width="1"/><path d="M10.8 8.4 Q11.5 6.5 12 5.7" stroke-width="1"/></g><rect x="6.8" y="11" width="1.2" height="2" fill="#777"/></svg>
<div class="t" style="left:47px;top:805.50px;font-size:11px;line-height:11px;color:#111;">км 172,417 – км 172,757</div>
<div class="r" style="left:44px;top:820px;width:192px;height:1px;background:#d4d4d4;"></div>
<svg class="s" style="left:16px;top:829px;" width="11" height="1" viewBox="0 0 11 1"><path d="M0 0.5 H11" stroke="#999" stroke-dasharray="1 1"/></svg>
<svg class="s" style="left:26px;top:822px;" width="17" height="17" viewBox="0 0 17 17"><g fill="none" stroke="#111" stroke-width="1.2"><path d="M2.4 1 V16 M6.2 1 V16 M0.8 2.3 H2.4 M0.8 5.6 H2.4 M0.8 8.4 H2.4 M6.2 2.6 H16 M6.2 5.7 H16"/><circle cx="8.6" cy="8.4" r="2.2"/><path d="M6.2 16 Q7 12.5 11 12 Q15.5 11.5 16 5.7"/><path d="M6.2 13.4 Q7.5 11.2 10.5 10.8 Q13.6 10.2 14 5.7" stroke-width="1"/><path d="M10.8 8.4 Q11.5 6.5 12 5.7" stroke-width="1"/></g><rect x="6.8" y="11" width="1.2" height="2" fill="#777"/></svg>
<div class="t" style="left:47px;top:823.50px;font-size:11px;line-height:11px;color:#111;">км 172,757 – км 173,097</div>
<div class="r" style="left:44px;top:838px;width:192px;height:1px;background:#d4d4d4;"></div>
<svg class="s" style="left:240px;top:826px;" width="10" height="6" viewBox="0 0 10 6"><path d="M1 1 L5 5 L9 1" fill="none" stroke="#444" stroke-width="1.2"/></svg>
<svg class="s" style="left:240px;top:646px;" width="10" height="6" viewBox="0 0 10 6"><path d="M1 5 L5 1 L9 5" fill="none" stroke="#444" stroke-width="1.2"/></svg>
<div class="r" style="left:237px;top:722px;width:14px;height:17px;background:#d0d0d0;"></div>
<div class="r" style="left:2px;top:840px;width:254px;height:28px;background:#fff;"></div>
<div class="r" style="left:7px;top:841px;width:83px;height:22px;background:#fff;"></div>
<div class="r" style="left:89px;top:840px;width:56px;height:23px;background:#fff;box-sizing:border-box;border:1px solid #d0d0d0;border-bottom:none;border-radius:0 0 3px 0;"></div>
<div class="r" style="left:7px;top:863px;width:83px;height:3px;background:#0033cc;"></div>
<div class="r" style="left:2px;top:868px;width:254px;height:1px;background:#d0d0d0;"></div>
<svg class="s" style="left:19px;top:845px;" width="15" height="16" viewBox="0 0 15 16"><rect x="0.5" y="1.5" width="14" height="14" fill="#fff" stroke="#999"/><rect x="0" y="0" width="15" height="1.5" fill="#6a9ad8"/><path d="M5.5 3.5 H9.5 L12.5 12.5 H2.5Z" fill="#9a9a9a"/><rect x="2" y="12" width="11" height="2" fill="#222"/><path d="M7.5 4 V5.5 M7.5 7 V8.5 M7.5 10 V12" stroke="#fff" stroke-width="1.1"/></svg>
<div class="t" style="left:41px;top:847.50px;font-size:11px;line-height:11px;color:#1a1a3a;">Проект</div>
<svg class="s" style="left:92px;top:844px;" width="15" height="16" viewBox="0 0 15 16"><rect x="0.5" y="1.5" width="14" height="14" fill="#fff" stroke="#999"/><rect x="0" y="0" width="15" height="1.5" fill="#6a9ad8"/><g fill="none" stroke="#5a9ad8" stroke-width="0.9"><path d="M6 4 H13 L9.5 7 H2.5Z"/><path d="M11.5 6.5 H13 L9.5 9.5 H2.5 L4.5 7.5"/><path d="M11.5 9 H13 L9.5 12.5 H2.5 L4.5 10.5"/></g></svg>
<div class="t" style="left:113px;top:847.50px;font-size:11px;line-height:11px;color:#1a1a3a;">Слои</div>
<div class="r" style="left:258px;top:171px;width:949px;height:676px;box-sizing:border-box;border:2px solid #8a8a8a;border-right:1px solid #c8c8c8;border-bottom:1px solid #c8c8c8;"></div>
<svg class="s" style="left:260px;top:173px;overflow:hidden" width="946" height="673" viewBox="260 173 946 673"><rect x="260" y="173" width="946" height="673" fill="#fff"/><polygon points="493.4,373.5 537.4,380.9 525.3,453.1 482.4,444.3" fill="#cccccc"/><polygon points="718.9,376.0 775.3,382.0 764.0,486.5 706.0,481.0" fill="#cccccc"/><polygon points="258.0,459.4 860.0,530.4 952.0,533.5 1060.0,539.0 1206.0,551.0 1212.0,551.4 1212.0,694.6 1176.0,690.6 740.0,642.0 600.0,627.7 258.0,594.8" fill="#c8c864"/><polygon points="258.0,476.6 1212.0,589.6 1212.0,676.1 258.0,563.1" fill="#ffffcc"/><polygon points="258.0,492.8 1212.0,605.8 1212.0,662.6 258.0,549.6" fill="#cccccc"/><line x1="258" y1="497.1" x2="1212" y2="610.1" stroke="#fff" stroke-width="1.3" /><line x1="258" y1="546.8" x2="1212" y2="659.8" stroke="#fff" stroke-width="1.3" /><line x1="258" y1="521.9" x2="1031" y2="613.7" stroke="#fff" stroke-width="1.3"/><line x1="261" y1="527.3" x2="1031" y2="615.6" stroke="#fff" stroke-width="1.3" stroke-dasharray="42 14"/><path d="M1032.6 614.8 L1040.6 613.5999999999999 L1038.6 619.8Z" fill="#fff"/><path d="M1036.6 616.8 Q1044.6 624.3 1064.3 625.5" fill="none" stroke="#fff" stroke-width="1.6"/><line x1="1046.3999999999999" y1="615.4" x2="1089.0" y2="619.5999999999999" stroke="#fff" stroke-width="1.5"/><path d="M1102.1 623.6999999999999 L1110.1 622.4999999999999 L1108.1 628.6999999999999Z" fill="#fff"/><path d="M1106.1 625.6999999999999 Q1114.1 633.1999999999999 1133.8 634.4" fill="none" stroke="#fff" stroke-width="1.6"/><line x1="1115.8999999999999" y1="624.3" x2="1146.5" y2="627.4999999999999" stroke="#fff" stroke-width="1.5"/><line x1="1161.3" y1="629.9" x2="1212" y2="635" stroke="#fff" stroke-width="1.5"/><polygon points="530.3,483.0 1212.0,566.0 1212.0,573.6 530.3,490.6" fill="#cccccc" stroke="#00a000" stroke-width="1.1"/><path d="M530.3 483.8 L536.3 490.5 M553.8 486.7 L559.8 493.4 M577.4 489.5 L583.3 496.3 M600.9 492.4 L606.8 499.1 M624.4 495.3 L630.4 502.0 M647.9 498.1 L653.9 504.8 M671.5 501.0 L677.4 507.7 M695.0 503.9 L700.9 510.6 M718.5 506.7 L724.5 513.4 M742.0 509.6 L748.0 516.3 M765.6 512.4 L771.5 519.2 M789.1 515.3 L795.0 522.0 M812.6 518.2 L818.6 524.9 M836.1 521.0 L842.1 527.8 M859.7 523.9 L865.6 530.6 M883.2 526.8 L889.1 533.5 M906.7 529.6 L912.7 536.4 M930.2 532.5 L936.2 539.2 M953.8 535.4 L959.7 542.1 M977.3 538.2 L983.3 544.9 M1000.8 541.1 L1006.8 547.8 M1024.4 544.0 L1030.3 550.7 M1047.9 546.8 L1053.8 553.5 M1071.4 549.7 L1077.4 556.4 M1094.9 552.5 L1100.9 559.3 M1118.5 555.4 L1124.4 562.1 M1142.0 558.3 L1147.9 565.0 M1165.5 561.1 L1171.5 567.9 M1189.0 564.0 L1195.0 570.7 M540.2 485.0 L534.3 490.3 M558.8 487.3 L552.9 492.5 M577.5 489.5 L571.5 494.8 M596.1 491.8 L590.1 497.1 M614.7 494.1 L608.7 499.3 M633.3 496.3 L627.3 501.6 M651.9 498.6 L645.9 503.9 M670.5 500.9 L664.6 506.1 M689.1 503.1 L683.2 508.4 M707.7 505.4 L701.8 510.7 M726.4 507.7 L720.4 512.9 M745.0 509.9 L739.0 515.2 M763.6 512.2 L757.6 517.5 M782.2 514.5 L776.2 519.7 M800.8 516.7 L794.8 522.0 M819.4 519.0 L813.5 524.3 M838.0 521.3 L832.1 526.5 M856.6 523.5 L850.7 528.8 M875.3 525.8 L869.3 531.1 M893.9 528.1 L887.9 533.3 M912.5 530.3 L906.5 535.6 M931.1 532.6 L925.1 537.9 M949.7 534.9 L943.7 540.1 M968.3 537.1 L962.4 542.4 M986.9 539.4 L981.0 544.7 M1005.5 541.7 L999.6 546.9 M1024.2 543.9 L1018.2 549.2 M1042.8 546.2 L1036.8 551.5 M1061.4 548.5 L1055.4 553.7 M1080.0 550.7 L1074.0 556.0 M1098.6 553.0 L1092.6 558.3 M1117.2 555.3 L1111.3 560.5 M1135.8 557.5 L1129.9 562.8 M1154.4 559.8 L1148.5 565.1 M1173.1 562.1 L1167.1 567.3 M1191.7 564.3 L1185.7 569.6 M1210.3 566.6 L1204.3 571.9 " fill="none" stroke="#ff2020" stroke-width="1"/><polygon points="609.3,681.5 1212.0,742.2 1212.0,749.8 609.3,689.1" fill="#cccccc" stroke="#00a000" stroke-width="1.1"/><path d="M609.3 682.3 L615.3 688.9 M632.9 684.7 L638.9 691.3 M656.5 687.0 L662.4 693.7 M680.0 689.4 L686.0 696.0 M703.6 691.8 L709.6 698.4 M727.2 694.2 L733.2 700.8 M750.8 696.5 L756.8 703.2 M774.4 698.9 L780.3 705.5 M797.9 701.3 L803.9 707.9 M821.5 703.7 L827.5 710.3 M845.1 706.0 L851.1 712.7 M868.7 708.4 L874.7 715.0 M892.3 710.8 L898.2 717.4 M915.8 713.2 L921.8 719.8 M939.4 715.5 L945.4 722.1 M963.0 717.9 L969.0 724.5 M986.6 720.3 L992.6 726.9 M1010.2 722.7 L1016.1 729.3 M1033.8 725.0 L1039.7 731.6 M1057.3 727.4 L1063.3 734.0 M1080.9 729.8 L1086.9 736.4 M1104.5 732.2 L1110.5 738.8 M1128.1 734.5 L1134.0 741.1 M1151.7 736.9 L1157.6 743.5 M1175.2 739.3 L1181.2 745.9 M1198.8 741.7 L1204.8 748.3 M619.2 683.3 L613.3 688.7 M637.9 685.2 L631.9 690.6 M656.6 687.1 L650.6 692.5 M675.2 688.9 L669.2 694.3 M693.9 690.8 L687.9 696.2 M712.5 692.7 L706.6 698.1 M731.2 694.6 L725.2 700.0 M749.8 696.5 L743.9 701.9 M768.5 698.3 L762.5 703.7 M787.2 700.2 L781.2 705.6 M805.8 702.1 L799.8 707.5 M824.5 704.0 L818.5 709.4 M843.1 705.8 L837.1 711.2 M861.8 707.7 L855.8 713.1 M880.4 709.6 L874.5 715.0 M899.1 711.5 L893.1 716.9 M917.7 713.4 L911.8 718.8 M936.4 715.2 L930.4 720.6 M955.1 717.1 L949.1 722.5 M973.7 719.0 L967.7 724.4 M992.4 720.9 L986.4 726.3 M1011.0 722.8 L1005.0 728.2 M1029.7 724.6 L1023.7 730.0 M1048.3 726.5 L1042.4 731.9 M1067.0 728.4 L1061.0 733.8 M1085.6 730.3 L1079.7 735.7 M1104.3 732.2 L1098.3 737.6 M1123.0 734.0 L1117.0 739.4 M1141.6 735.9 L1135.6 741.3 M1160.3 737.8 L1154.3 743.2 M1178.9 739.7 L1172.9 745.1 M1197.6 741.5 L1191.6 746.9 " fill="none" stroke="#ff2020" stroke-width="1"/><circle cx="297" cy="471" r="6.6" fill="#fff" stroke="#000" stroke-width="1.1"/><path d="M292 469 Q297 473 302 469" fill="none" stroke="#000" stroke-width="0.9"/><circle cx="479.5" cy="492.3" r="6.6" fill="#fff" stroke="#000" stroke-width="1.1"/><path d="M474.5 490.3 Q479.5 494.3 484.5 490.3" fill="none" stroke="#000" stroke-width="0.9"/><circle cx="716.4" cy="520.3" r="6.6" fill="#fff" stroke="#000" stroke-width="1.1"/><path d="M711.4 518.3 Q716.4 522.3 721.4 518.3" fill="none" stroke="#000" stroke-width="0.9"/><circle cx="939" cy="545.2" r="6.6" fill="#fff" stroke="#000" stroke-width="1.1"/><path d="M934 543.2 Q939 547.2 944 543.2" fill="none" stroke="#000" stroke-width="0.9"/><circle cx="1134.2" cy="570" r="6.6" fill="#fff" stroke="#000" stroke-width="1.1"/><path d="M1129.2 568 Q1134.2 572 1139.2 568" fill="none" stroke="#000" stroke-width="0.9"/><text x="603" y="533" font-size="8.5" font-family="Liberation Sans" font-weight="700" fill="#111" transform="rotate(6.5 603 533)">1.2</text><text x="667" y="565" font-size="8.5" font-family="Liberation Sans" font-weight="700" fill="#111" transform="rotate(6.5 667 565)">1.11</text><text x="656" y="588" font-size="8.5" font-family="Liberation Sans" font-weight="700" fill="#111" transform="rotate(6.5 656 588)">1.2</text><text x="1068" y="628" font-size="8.5" font-family="Liberation Sans" font-weight="700" fill="#111" transform="rotate(6.5 1068 628)">1.19</text><text x="1138" y="635" font-size="8.5" font-family="Liberation Sans" font-weight="700" fill="#111" transform="rotate(6.5 1138 635)">1.19</text><text x="1199" y="631" font-size="8.5" font-family="Liberation Sans" font-weight="700" fill="#111" transform="rotate(6.5 1199 631)">1.</text><polyline points="344.8,304.0 340.1,351.2" fill="none" stroke="#00a000" stroke-width="1.6"/><polyline points="332.1,430.8 326.8,484.0" fill="none" stroke="#00a000" stroke-width="1.6"/><line x1="327.5" y1="470" x2="326.7" y2="485" stroke="#00a000" stroke-width="3.2"/><polyline points="317.2,571.0 312.9,620.2" fill="none" stroke="#00a000" stroke-width="1.6"/><polyline points="305.9,699.9 301.5,750.0" fill="none" stroke="#00a000" stroke-width="1.6"/><line x1="317.2" y1="571" x2="316.4" y2="589" stroke="#00a000" stroke-width="3.2"/><polyline points="976.9,370.0 970.6,422.1" fill="none" stroke="#00a000" stroke-width="1.6"/><polyline points="960.9,501.5 955.0,550.0" fill="none" stroke="#00a000" stroke-width="1.6"/><line x1="956.5" y1="533" x2="955.7" y2="550" stroke="#00a000" stroke-width="3.2"/><polyline points="1058.5,390.0 1053.9,426.6" fill="none" stroke="#00a000" stroke-width="1.6"/><polyline points="1044.0,505.9 1036.0,570.0" fill="none" stroke="#00a000" stroke-width="1.6"/><line x1="1038" y1="551" x2="1037.2" y2="569" stroke="#00a000" stroke-width="3.2"/><polyline points="1025.5,656.0 1020.5,709.2" fill="none" stroke="#00a000" stroke-width="1.6"/><polyline points="1012.9,788.9 1009.0,830.0" fill="none" stroke="#00a000" stroke-width="1.6"/><line x1="1025.5" y1="656" x2="1024.7" y2="674" stroke="#00a000" stroke-width="3.2"/><polyline points="449.0,281.0 470.0,285.0" fill="none" stroke="#00a000" stroke-width="1"/><polyline points="470.0,279.0 469.4,291.0" fill="none" stroke="#00a000" stroke-width="1"/><polyline points="1005.0,357.2 1027.5,359.5" fill="none" stroke="#00a000" stroke-width="1"/><polyline points="1028.2,354.0 1027.2,365.0" fill="none" stroke="#00a000" stroke-width="1"/><polyline points="1094.0,361.0 1116.5,363.5" fill="none" stroke="#00a000" stroke-width="1"/><polyline points="1117.2,357.0 1116.2,369.0" fill="none" stroke="#00a000" stroke-width="1"/><text x="353" y="218" font-size="18" font-family="Liberation Sans" fill="#00a000" text-anchor="middle" dominant-baseline="central" transform="rotate(-84 353 218)">3.20</text><text x="422.4" y="225.5" font-size="18" font-family="Liberation Sans" fill="#00a000" text-anchor="middle" dominant-baseline="central" transform="rotate(-84 422.4 225.5)">3.24</text><text x="987" y="293.4" font-size="18" font-family="Liberation Sans" fill="#00a000" text-anchor="middle" dominant-baseline="central" transform="rotate(-84 987 293.4)">1.11.2</text><text x="1068.6" y="302.8" font-size="18" font-family="Liberation Sans" fill="#00a000" text-anchor="middle" dominant-baseline="central" transform="rotate(-84 1068.6 302.8)">3.20</text><text x="335.5" y="391" font-size="18" font-family="Liberation Sans" fill="#00a000" text-anchor="middle" dominant-baseline="central" transform="rotate(-84 335.5 391)">(170,850)</text><text x="309" y="660" font-size="18" font-family="Liberation Sans" fill="#00a000" text-anchor="middle" dominant-baseline="central" transform="rotate(96 309 660)">(170,850)</text><text x="967.5" y="462" font-size="18" font-family="Liberation Sans" fill="#00a000" text-anchor="middle" dominant-baseline="central" transform="rotate(-84 967.5 462)">(170,940)</text><text x="1047" y="466" font-size="18" font-family="Liberation Sans" fill="#00a000" text-anchor="middle" dominant-baseline="central" transform="rotate(-84 1047 466)">(170,952)</text><rect x="974.5" y="740" width="83.0" height="18" fill="#fff" transform="rotate(-84 1016 749)"/><text x="1016" y="749" font-size="18" font-family="Liberation Sans" fill="#00a000" text-anchor="middle" dominant-baseline="central" transform="rotate(-84 1016 749)">(170,952)</text><text x="325" y="832" font-size="18" font-family="Liberation Sans" fill="#00a000" text-anchor="middle" dominant-baseline="central" transform="rotate(-84 325 832)">3.20</text><text x="263.5" y="821" font-size="18" font-family="Liberation Sans" fill="#00a000" text-anchor="middle" dominant-baseline="central" transform="rotate(96 263.5 821)">3.21</text><g transform="translate(347.8 271.8) rotate(5.6)"><rect x="-31" y="-31" width="62" height="62" rx="3" fill="#ccff00" stroke="#000" stroke-width="1.2"/><circle r="21.8" fill="#fff" stroke="#ff0000" stroke-width="3.6"/><path d="M-3.5 -15 H6 Q8 -15 8 -13 V-4 Q8 -2 6 -2 H-3.5 Q-5.5 -2 -5.5 -4 V-13 Q-5.5 -15 -3.5 -15Z" fill="#000"/><rect x="-4" y="-13" width="2" height="8" fill="#fff"/><rect x="-6.5" y="-14" width="2" height="2" fill="#000"/><rect x="-6.5" y="-5" width="2" height="2" fill="#000"/><path d="M-4 3 H5.5 Q7.5 3 7.5 5 V13.5 Q7.5 15.5 5.5 15.5 H-4 Q-6 15.5 -6 13.5 V5 Q-6 3 -4 3Z" fill="#ff0000"/><rect x="-5" y="5" width="1.6" height="8" fill="#fff"/><rect x="-7.5" y="4" width="1.6" height="1.6" fill="#ff0000"/><rect x="-7.5" y="13" width="1.6" height="1.6" fill="#ff0000"/></g><g transform="translate(417.3 279.3) rotate(5.6)"><rect x="-31" y="-31" width="62" height="62" rx="3" fill="#ccff00" stroke="#000" stroke-width="1.2"/><circle r="21.8" fill="#fff" stroke="#ff0000" stroke-width="3.6"/><text x="0" y="0" font-size="24" font-family="Liberation Sans" fill="#000" stroke="#000" stroke-width="0.7" text-anchor="middle" dominant-baseline="central" transform="rotate(-84.4)">50</text></g><g transform="translate(1063 357.4) rotate(6)"><rect x="-31" y="-31" width="62" height="62" rx="3" fill="#ccff00" stroke="#000" stroke-width="1.2"/><circle r="21.8" fill="#fff" stroke="#ff0000" stroke-width="3.6"/><path d="M-3.5 -15 H6 Q8 -15 8 -13 V-4 Q8 -2 6 -2 H-3.5 Q-5.5 -2 -5.5 -4 V-13 Q-5.5 -15 -3.5 -15Z" fill="#000"/><rect x="-4" y="-13" width="2" height="8" fill="#fff"/><rect x="-6.5" y="-14" width="2" height="2" fill="#000"/><rect x="-6.5" y="-5" width="2" height="2" fill="#000"/><path d="M-4 3 H5.5 Q7.5 3 7.5 5 V13.5 Q7.5 15.5 5.5 15.5 H-4 Q-6 15.5 -6 13.5 V5 Q-6 3 -4 3Z" fill="#ff0000"/><rect x="-5" y="5" width="1.6" height="8" fill="#fff"/><rect x="-7.5" y="4" width="1.6" height="1.6" fill="#ff0000"/><rect x="-7.5" y="13" width="1.6" height="1.6" fill="#ff0000"/></g><g transform="translate(330.6 779.6) rotate(5.6)"><rect x="-31" y="-31" width="62" height="62" rx="3" fill="#ccff00" stroke="#000" stroke-width="1.2"/><circle r="21.8" fill="#fff" stroke="#ff0000" stroke-width="3.6"/><path d="M-3.5 -15 H6 Q8 -15 8 -13 V-4 Q8 -2 6 -2 H-3.5 Q-5.5 -2 -5.5 -4 V-13 Q-5.5 -15 -3.5 -15Z" fill="#000"/><rect x="-4" y="-13" width="2" height="8" fill="#fff"/><rect x="-6.5" y="-14" width="2" height="2" fill="#000"/><rect x="-6.5" y="-5" width="2" height="2" fill="#000"/><path d="M-4 3 H5.5 Q7.5 3 7.5 5 V13.5 Q7.5 15.5 5.5 15.5 H-4 Q-6 15.5 -6 13.5 V5 Q-6 3 -4 3Z" fill="#ff0000"/><rect x="-5" y="5" width="1.6" height="8" fill="#fff"/><rect x="-7.5" y="4" width="1.6" height="1.6" fill="#ff0000"/><rect x="-7.5" y="13" width="1.6" height="1.6" fill="#ff0000"/></g><g transform="translate(970 860) rotate(6)"><rect x="-31" y="-31" width="62" height="62" rx="3" fill="#ccff00" stroke="#000" stroke-width="1.2"/><circle r="21.8" fill="#fff" stroke="#ff0000" stroke-width="3.6"/><path d="M-3.5 -15 H6 Q8 -15 8 -13 V-4 Q8 -2 6 -2 H-3.5 Q-5.5 -2 -5.5 -4 V-13 Q-5.5 -15 -3.5 -15Z" fill="#000"/><rect x="-4" y="-13" width="2" height="8" fill="#fff"/><rect x="-6.5" y="-14" width="2" height="2" fill="#000"/><rect x="-6.5" y="-5" width="2" height="2" fill="#000"/><path d="M-4 3 H5.5 Q7.5 3 7.5 5 V13.5 Q7.5 15.5 5.5 15.5 H-4 Q-6 15.5 -6 13.5 V5 Q-6 3 -4 3Z" fill="#ff0000"/><rect x="-5" y="5" width="1.6" height="8" fill="#fff"/><rect x="-7.5" y="4" width="1.6" height="1.6" fill="#ff0000"/><rect x="-7.5" y="13" width="1.6" height="1.6" fill="#ff0000"/></g><g transform="translate(1038 868) rotate(6)"><rect x="-31" y="-31" width="62" height="62" rx="3" fill="#ccff00" stroke="#000" stroke-width="1.2"/><circle r="21.8" fill="#fff" stroke="#ff0000" stroke-width="3.6"/></g><polygon points="954.3,350.2 1007.2,328.4 999.4,384.4" fill="#000" stroke="#000" stroke-width="3" stroke-linejoin="round"/><polygon points="958,350.6 1005.2,331.2 998.3,381" fill="#fff" stroke="#ff0000" stroke-width="4.6" stroke-linejoin="miter"/><path d="M975 358.5 Q980 352.5 985 352.6 L999.5 353.3" fill="none" stroke="#000" stroke-width="3"/><circle cx="268" cy="773" r="24.3" fill="#fff" stroke="#000" stroke-width="1.3"/><rect x="255" y="760" width="10" height="26" fill="#d0d0d0"/><path d="M253 758 L282 790 M256 755 L285 787 M259 752 L288 784" stroke="#000" stroke-width="1.1"/><path d="M768.5 281.5 V297 L772 293.5 L775 299 L777 298 L774.5 292.5 L779.5 292.5Z" fill="#fff" stroke="#000" stroke-width="1"/></svg>
<div class="r" style="left:258px;top:847px;width:914px;height:20px;overflow:hidden;">
<div class="t" style="left:8px;top:4px;font-size:11px;line-height:11px;color:#111;">км 166,977 – км 167,317</div>
<div class="r" style="left:136px;top:2px;width:1px;height:14px;background:#888;"></div>
<div class="t" style="left:140px;top:4px;font-size:11px;line-height:11px;color:#111;">км 167,317 – км 167,657</div>
<div class="r" style="left:268px;top:2px;width:1px;height:14px;background:#888;"></div>
<div class="t" style="left:272px;top:4px;font-size:11px;line-height:11px;color:#111;">км 167,657 – км 167,997</div>
<div class="r" style="left:400px;top:2px;width:1px;height:14px;background:#888;"></div>
<div class="t" style="left:404px;top:4px;font-size:11px;line-height:11px;color:#111;">км 167,997 – км 168,337</div>
<div class="r" style="left:532px;top:2px;width:1px;height:14px;background:#888;"></div>
<div class="t" style="left:536px;top:4px;font-size:11px;line-height:11px;color:#111;">км 168,337 – км 168,677</div>
<div class="r" style="left:664px;top:2px;width:1px;height:14px;background:#888;"></div>
<div class="t" style="left:668px;top:4px;font-size:11px;line-height:11px;color:#111;">км 168,677 – км 169,017</div>
<div class="r" style="left:796px;top:2px;width:1px;height:14px;background:#888;"></div>
<div class="t" style="left:800px;top:4px;font-size:11px;line-height:11px;color:#111;">км 169,017 – км 169,357</div>
<div class="r" style="left:928px;top:2px;width:1px;height:14px;background:#888;"></div>
</div>
<div class="r" style="left:1176px;top:850px;width:15px;height:15px;background:#fff;box-sizing:border-box;border:1px solid #888;"></div>
<div class="r" style="left:1192px;top:850px;width:15px;height:15px;background:#fff;box-sizing:border-box;border:1px solid #888;"></div>
<svg class="s" style="left:1180px;top:853px;" width="6" height="10" viewBox="0 0 6 10"><path d="M5 0 V9 L0 4.5Z" fill="#111"/></svg>
<svg class="s" style="left:1197px;top:853px;" width="6" height="10" viewBox="0 0 6 10"><path d="M0 0 V9 L5 4.5Z" fill="#111"/></svg>
<div class="r" style="left:258px;top:868px;width:950px;height:1px;background:#d0d0d0;"></div>
<div class="r" style="left:1209px;top:171px;width:389px;height:698px;box-sizing:border-box;border:1px solid #d0d0d0;border-bottom:none;"></div>
<div class="t" style="left:1218px;top:184.35px;font-size:11.3px;line-height:11.3px;color:#262626;font-weight:700;">Свойства</div>
<svg class="s" style="left:1552px;top:185px;" width="10" height="11" viewBox="0 0 10 11"><path d="M1 1 H9 L6.5 4.5 V6.5 L8.5 8 H1.5 L3.5 6.5 V4.5Z M5 8 V11" fill="none" stroke="#222" stroke-width="1"/></svg>
<svg class="s" style="left:1578px;top:185px;" width="8" height="8" viewBox="0 0 8 8"><path d="M0.5 0.5 L7.5 7.5 M7.5 0.5 L0.5 7.5" stroke="#222" stroke-width="1.1"/></svg>
<svg class="s" style="left:1222px;top:212px;" width="16" height="16" viewBox="0 0 16 16"><path d="M5 0 H11 L15.5 14 H0.5Z" fill="#9a9a9a"/><rect x="0" y="13.5" width="16" height="2.5" fill="#333"/><path d="M8 2 V4 M8 6 V8 M8 10 V12.5" stroke="#fff" stroke-width="1.6"/></svg>
<div class="t" style="left:1243px;top:216.50px;font-size:11px;line-height:11px;color:#1a1a4a;">Основная дорога</div>
<div class="r" style="left:1336px;top:213px;width:1px;height:19px;background:#111;"></div>
<div class="r" style="left:1214px;top:233px;width:380px;height:604px;box-sizing:border-box;border:1px solid #9a9a9a;border-right:2px solid #a8a8a8;border-bottom:2px solid #a8a8a8;border-left:2px solid #b0b0b0;"></div>
<div class="r" style="left:1216px;top:234px;width:375px;height:18px;background:#fffccc;"></div>
<div class="r" style="left:1216px;top:252px;width:375px;height:1px;background:#dadada;"></div>
<div class="t" style="left:1258px;top:236.65px;font-size:11.7px;line-height:11.7px;color:#000;font-weight:700;">Параметры оси</div>
<div class="r" style="left:1275px;top:270px;width:316px;height:1px;background:#dadada;"></div>
<div class="r" style="left:1400px;top:253px;width:1px;height:17px;background:#dadada;"></div>
<div class="t" style="left:1277px;top:255.50px;font-size:11px;line-height:11px;color:#111;max-width:123px;overflow:hidden;">Подпись на карте</div>
<div class="t" style="left:1402.5px;top:256.50px;font-size:11px;line-height:11px;color:#0000ee;">Основная дорога</div>
<div class="r" style="left:1275px;top:288px;width:316px;height:1px;background:#dadada;"></div>
<div class="r" style="left:1400px;top:271px;width:1px;height:17px;background:#dadada;"></div>
<div class="t" style="left:1277px;top:273.50px;font-size:11px;line-height:11px;color:#111;max-width:123px;overflow:hidden;">Только чтение</div>
<div class="r" style="left:1275px;top:306px;width:316px;height:1px;background:#dadada;"></div>
<div class="r" style="left:1400px;top:289px;width:1px;height:17px;background:#dadada;"></div>
<div class="t" style="left:1277px;top:291.50px;font-size:11px;line-height:11px;color:#111;max-width:123px;overflow:hidden;">Кольцевая ось</div>
<div class="t" style="left:1402.5px;top:292.50px;font-size:11px;line-height:11px;color:#000;">Нет</div>
<div class="r" style="left:1275px;top:307px;width:316px;height:17px;background:#ccffcc;"></div>
<div class="r" style="left:1275px;top:324px;width:316px;height:1px;background:#dadada;"></div>
<div class="t" style="left:1277px;top:309.50px;font-size:11px;line-height:11px;color:#111;">Точки (4909)</div>
<div class="r" style="left:1275px;top:342px;width:316px;height:1px;background:#dadada;"></div>
<div class="r" style="left:1400px;top:325px;width:1px;height:17px;background:#dadada;"></div>
<div class="t" style="left:1277px;top:327.50px;font-size:11px;line-height:11px;color:#111;max-width:123px;overflow:hidden;">Начало оси, км</div>
<div class="t" style="left:1402.5px;top:328.50px;font-size:11px;line-height:11px;color:#0000ee;">146,204</div>
<div class="r" style="left:1275px;top:360px;width:316px;height:1px;background:#dadada;"></div>
<div class="r" style="left:1400px;top:343px;width:1px;height:17px;background:#dadada;"></div>
<div class="t" style="left:1277px;top:345.50px;font-size:11px;line-height:11px;color:#111;max-width:123px;overflow:hidden;">Конец оси, км</div>
<div class="t" style="left:1402.5px;top:346.50px;font-size:11px;line-height:11px;color:#000;">202,461</div>
<div class="r" style="left:1275px;top:378px;width:316px;height:1px;background:#dadada;"></div>
<div class="r" style="left:1400px;top:361px;width:1px;height:17px;background:#dadada;"></div>
<div class="t" style="left:1277px;top:363.50px;font-size:11px;line-height:11px;color:#111;max-width:123px;overflow:hidden;">Длина оси, км</div>
<div class="t" style="left:1402.5px;top:364.50px;font-size:11px;line-height:11px;color:#000;">56,257</div>
<div class="r" style="left:1275px;top:396px;width:316px;height:1px;background:#dadada;"></div>
<div class="r" style="left:1400px;top:379px;width:1px;height:17px;background:#dadada;"></div>
<div class="t" style="left:1297px;top:381.50px;font-size:11px;line-height:11px;color:#111;max-width:103px;overflow:hidden;">Учитывать высотные отметки</div>
<div class="r" style="left:1275px;top:414px;width:316px;height:1px;background:#dadada;"></div>
<div class="r" style="left:1400px;top:397px;width:1px;height:17px;background:#dadada;"></div>
<div class="t" style="left:1277px;top:399.50px;font-size:11px;line-height:11px;color:#111;max-width:123px;overflow:hidden;">Уровень по высоте</div>
<div class="t" style="left:1402.5px;top:400.50px;font-size:11px;line-height:11px;color:#0000ee;">Базовый уровень</div>
<div class="r" style="left:1216px;top:414px;width:375px;height:18px;background:#fffccc;"></div>
<div class="r" style="left:1216px;top:432px;width:375px;height:1px;background:#dadada;"></div>
<div class="t" style="left:1258px;top:416.65px;font-size:11.7px;line-height:11.7px;color:#000;font-weight:700;">Примыкания начала и конца</div>
<div class="r" style="left:1216px;top:432px;width:375px;height:18px;background:#fffccc;"></div>
<div class="r" style="left:1216px;top:450px;width:375px;height:1px;background:#dadada;"></div>
<div class="t" style="left:1258px;top:434.65px;font-size:11.7px;line-height:11.7px;color:#000;font-weight:700;">Расчётные параметры</div>
<div class="r" style="left:1275px;top:468px;width:316px;height:1px;background:#dadada;"></div>
<div class="r" style="left:1400px;top:451px;width:1px;height:17px;background:#dadada;"></div>
<div class="t" style="left:1277px;top:453.50px;font-size:11px;line-height:11px;color:#111;max-width:123px;overflow:hidden;">Направление движения</div>
<div class="t" style="left:1402.5px;top:454.50px;font-size:11px;line-height:11px;color:#0000ee;">Прямое и обратное</div>
<div class="r" style="left:1275px;top:469px;width:316px;height:17px;background:#ccffcc;"></div>
<div class="r" style="left:1275px;top:486px;width:316px;height:1px;background:#dadada;"></div>
<div class="t" style="left:1277px;top:471.50px;font-size:11px;line-height:11px;color:#111;">Категории</div>
<div class="r" style="left:1275px;top:487px;width:316px;height:17px;background:#ccffcc;"></div>
<div class="r" style="left:1275px;top:504px;width:316px;height:1px;background:#dadada;"></div>
<div class="t" style="left:1277px;top:489.50px;font-size:11px;line-height:11px;color:#111;">Населённые пункты</div>
<div class="r" style="left:1256px;top:505px;width:335px;height:17px;background:#ccffcc;"></div>
<div class="r" style="left:1256px;top:522px;width:335px;height:1px;background:#dadada;"></div>
<div class="t" style="left:1258px;top:507.50px;font-size:11px;line-height:11px;color:#111;">Ограничения</div>
<div class="r" style="left:1216px;top:522px;width:375px;height:18px;background:#fffccc;"></div>
<div class="r" style="left:1216px;top:540px;width:375px;height:1px;background:#dadada;"></div>
<div class="t" style="left:1258px;top:524.65px;font-size:11.7px;line-height:11.7px;color:#000;font-weight:700;">Параметры новых листов</div>
<div class="r" style="left:1216px;top:540px;width:375px;height:18px;background:#fffccc;"></div>
<div class="r" style="left:1216px;top:558px;width:375px;height:1px;background:#dadada;"></div>
<div class="t" style="left:1258px;top:542.65px;font-size:11.7px;line-height:11.7px;color:#000;font-weight:700;">Панорамное видео</div>
<div class="r" style="left:1216px;top:558px;width:375px;height:18px;background:#fffccc;"></div>
<div class="r" style="left:1216px;top:576px;width:375px;height:1px;background:#dadada;"></div>
<div class="t" style="left:1258px;top:560.65px;font-size:11.7px;line-height:11.7px;color:#000;font-weight:700;">Изображения</div>
<svg class="s" style="left:1225px;top:248px;" width="1" height="273" viewBox="0 0 1 273"><path d="M0.5 0 V273" stroke="#888" stroke-dasharray="1 1"/></svg>
<svg class="s" style="left:1245px;top:253px;" width="1" height="153" viewBox="0 0 1 153"><path d="M0.5 0 V153" stroke="#888" stroke-dasharray="1 1"/></svg>
<svg class="s" style="left:1245px;top:450px;" width="1" height="64" viewBox="0 0 1 64"><path d="M0.5 0 V64" stroke="#888" stroke-dasharray="1 1"/></svg>
<svg class="s" style="left:1265px;top:375px;" width="1" height="13" viewBox="0 0 1 13"><path d="M0.5 0 V13" stroke="#888" stroke-dasharray="1 1"/></svg>
<svg class="s" style="left:1230px;top:243px;" width="7" height="1" viewBox="0 0 7 1"><path d="M0 0.5 H7" stroke="#888" stroke-dasharray="1 1"/></svg>
<svg class="s" style="left:1246px;top:261px;" width="11" height="1" viewBox="0 0 11 1"><path d="M0 0.5 H11" stroke="#888" stroke-dasharray="1 1"/></svg>
<svg class="s" style="left:1246px;top:279px;" width="11" height="1" viewBox="0 0 11 1"><path d="M0 0.5 H11" stroke="#888" stroke-dasharray="1 1"/></svg>
<svg class="s" style="left:1246px;top:297px;" width="11" height="1" viewBox="0 0 11 1"><path d="M0 0.5 H11" stroke="#888" stroke-dasharray="1 1"/></svg>
<svg class="s" style="left:1250px;top:315px;" width="7" height="1" viewBox="0 0 7 1"><path d="M0 0.5 H7" stroke="#888" stroke-dasharray="1 1"/></svg>
<svg class="s" style="left:1246px;top:333px;" width="11" height="1" viewBox="0 0 11 1"><path d="M0 0.5 H11" stroke="#888" stroke-dasharray="1 1"/></svg>
<svg class="s" style="left:1246px;top:351px;" width="11" height="1" viewBox="0 0 11 1"><path d="M0 0.5 H11" stroke="#888" stroke-dasharray="1 1"/></svg>
<svg class="s" style="left:1246px;top:369px;" width="11" height="1" viewBox="0 0 11 1"><path d="M0 0.5 H11" stroke="#888" stroke-dasharray="1 1"/></svg>
<svg class="s" style="left:1266px;top:387px;" width="11" height="1" viewBox="0 0 11 1"><path d="M0 0.5 H11" stroke="#888" stroke-dasharray="1 1"/></svg>
<svg class="s" style="left:1246px;top:405px;" width="11" height="1" viewBox="0 0 11 1"><path d="M0 0.5 H11" stroke="#888" stroke-dasharray="1 1"/></svg>
<svg class="s" style="left:1230px;top:423px;" width="7" height="1" viewBox="0 0 7 1"><path d="M0 0.5 H7" stroke="#888" stroke-dasharray="1 1"/></svg>
<svg class="s" style="left:1230px;top:441px;" width="7" height="1" viewBox="0 0 7 1"><path d="M0 0.5 H7" stroke="#888" stroke-dasharray="1 1"/></svg>
<svg class="s" style="left:1246px;top:459px;" width="11" height="1" viewBox="0 0 11 1"><path d="M0 0.5 H11" stroke="#888" stroke-dasharray="1 1"/></svg>
<svg class="s" style="left:1250px;top:477px;" width="7" height="1" viewBox="0 0 7 1"><path d="M0 0.5 H7" stroke="#888" stroke-dasharray="1 1"/></svg>
<svg class="s" style="left:1250px;top:495px;" width="7" height="1" viewBox="0 0 7 1"><path d="M0 0.5 H7" stroke="#888" stroke-dasharray="1 1"/></svg>
<svg class="s" style="left:1250px;top:513px;" width="6" height="1" viewBox="0 0 6 1"><path d="M0 0.5 H6" stroke="#888" stroke-dasharray="1 1"/></svg>
<svg class="s" style="left:1230px;top:531px;" width="7" height="1" viewBox="0 0 7 1"><path d="M0 0.5 H7" stroke="#888" stroke-dasharray="1 1"/></svg>
<svg class="s" style="left:1230px;top:549px;" width="7" height="1" viewBox="0 0 7 1"><path d="M0 0.5 H7" stroke="#888" stroke-dasharray="1 1"/></svg>
<svg class="s" style="left:1230px;top:567px;" width="7" height="1" viewBox="0 0 7 1"><path d="M0 0.5 H7" stroke="#888" stroke-dasharray="1 1"/></svg>
<svg class="s" style="left:1221px;top:239px;" width="9" height="9" viewBox="0 0 9 9"><rect x="0.5" y="0.5" width="8" height="8" fill="#fff" stroke="#8a8a8a"/><path d="M2 4.5 H7" stroke="#000"/></svg>
<svg class="s" style="left:1221px;top:419px;" width="9" height="9" viewBox="0 0 9 9"><rect x="0.5" y="0.5" width="8" height="8" fill="#fff" stroke="#8a8a8a"/><path d="M2 4.5 H7" stroke="#000"/><path d="M4.5 2 V7" stroke="#000"/></svg>
<svg class="s" style="left:1221px;top:437px;" width="9" height="9" viewBox="0 0 9 9"><rect x="0.5" y="0.5" width="8" height="8" fill="#fff" stroke="#8a8a8a"/><path d="M2 4.5 H7" stroke="#000"/></svg>
<svg class="s" style="left:1221px;top:527px;" width="9" height="9" viewBox="0 0 9 9"><rect x="0.5" y="0.5" width="8" height="8" fill="#fff" stroke="#8a8a8a"/><path d="M2 4.5 H7" stroke="#000"/><path d="M4.5 2 V7" stroke="#000"/></svg>
<svg class="s" style="left:1221px;top:545px;" width="9" height="9" viewBox="0 0 9 9"><rect x="0.5" y="0.5" width="8" height="8" fill="#fff" stroke="#8a8a8a"/><path d="M2 4.5 H7" stroke="#000"/><path d="M4.5 2 V7" stroke="#000"/></svg>
<svg class="s" style="left:1221px;top:563px;" width="9" height="9" viewBox="0 0 9 9"><rect x="0.5" y="0.5" width="8" height="8" fill="#fff" stroke="#8a8a8a"/><path d="M2 4.5 H7" stroke="#000"/><path d="M4.5 2 V7" stroke="#000"/></svg>
<svg class="s" style="left:1241px;top:311px;" width="9" height="9" viewBox="0 0 9 9"><rect x="0.5" y="0.5" width="8" height="8" fill="#fff" stroke="#8a8a8a"/><path d="M2 4.5 H7" stroke="#000"/><path d="M4.5 2 V7" stroke="#000"/></svg>
<svg class="s" style="left:1241px;top:365px;" width="9" height="9" viewBox="0 0 9 9"><rect x="0.5" y="0.5" width="8" height="8" fill="#fff" stroke="#8a8a8a"/><path d="M2 4.5 H7" stroke="#000"/></svg>
<svg class="s" style="left:1241px;top:473px;" width="9" height="9" viewBox="0 0 9 9"><rect x="0.5" y="0.5" width="8" height="8" fill="#fff" stroke="#8a8a8a"/><path d="M2 4.5 H7" stroke="#000"/><path d="M4.5 2 V7" stroke="#000"/></svg>
<svg class="s" style="left:1241px;top:491px;" width="9" height="9" viewBox="0 0 9 9"><rect x="0.5" y="0.5" width="8" height="8" fill="#fff" stroke="#8a8a8a"/><path d="M2 4.5 H7" stroke="#000"/><path d="M4.5 2 V7" stroke="#000"/></svg>
<svg class="s" style="left:1241px;top:509px;" width="9" height="9" viewBox="0 0 9 9"><rect x="0.5" y="0.5" width="8" height="8" fill="#fff" stroke="#8a8a8a"/><path d="M2 4.5 H7" stroke="#000"/><path d="M4.5 2 V7" stroke="#000"/></svg>
<svg class="s" style="left:1238px;top:236px;" width="16" height="16" viewBox="0 0 16 16"><path d="M1.2 11.5 C2 7 4 3.5 6 4.5 C8 5.5 8.5 10 10.5 9.5 C12.5 9 13.5 5 14.5 3" fill="none" stroke="#ff2020" stroke-width="2.4" stroke-linecap="round"/></svg>
<svg class="s" style="left:1258px;top:254px;" width="16" height="16" viewBox="0 0 16 16"><text x="0" y="14" font-size="15" font-family="Liberation Serif" fill="#555">Aa</text></svg>
<svg class="s" style="left:1258px;top:272px;" width="16" height="16" viewBox="0 0 16 16"><path d="M2 14 L3 11 L12 2 L14 4 L5 13Z" fill="#3a78d8"/><path d="M1 15 L2.5 12.5 L3.5 13.5Z" fill="#3a78d8"/></svg>
<svg class="s" style="left:1258px;top:289px;" width="16" height="16" viewBox="0 0 16 16"><rect x="1" y="1" width="14" height="14" rx="2" fill="#fff" stroke="#111" stroke-width="1.2"/><circle cx="8" cy="8" r="3" fill="none" stroke="#111" stroke-width="1.4"/><path d="M8 1 V4 M8 12 V15" stroke="#111"/></svg>
<svg class="s" style="left:1258px;top:307px;" width="16" height="16" viewBox="0 0 16 16"><path d="M1 8 L5 4 L9 7 L14 1" fill="none" stroke="#333" stroke-width="1.2"/><circle cx="1.5" cy="8" r="1.2" fill="#dd0"/><circle cx="5" cy="4" r="1.2" fill="#dd0"/><circle cx="14" cy="1.5" r="1.2" fill="#dd0"/><rect x="3" y="9" width="12" height="7" rx="2" fill="#fff" stroke="#333"/><text x="4.5" y="15" font-size="6.5" font-family="Liberation Sans" fill="#333">N?</text></svg>
<svg class="s" style="left:1258px;top:325px;" width="16" height="17" viewBox="0 0 16 17"><path d="M8 2 A6 6 0 0 1 8 14Z" fill="#ff2020"/><path d="M8 2 A6 6 0 0 0 8 14Z" fill="#fff" stroke="#ff2020" stroke-width="0.6"/><path d="M7.5 1 V17" stroke="#ff2020" stroke-width="1.2"/><text x="0" y="16" font-size="5" font-family="Liberation Sans" fill="#333">0,</text></svg>
<svg class="s" style="left:1258px;top:343px;" width="16" height="17" viewBox="0 0 16 17"><path d="M8 2 A6 6 0 0 1 8 14Z" fill="#ff2020"/><path d="M8 2 A6 6 0 0 0 8 14Z" fill="#fff" stroke="#ff2020" stroke-width="0.6"/><path d="M7.5 1 V17" stroke="#ff2020" stroke-width="1.2"/><text x="0" y="16" font-size="5" font-family="Liberation Sans" fill="#333">0,</text></svg>
<svg class="s" style="left:1258px;top:361px;" width="16" height="16" viewBox="0 0 16 16"><path d="M1 8 L5 4 L9 7 L15 1" fill="none" stroke="#777" stroke-width="1.3"/><text x="3" y="15.5" font-size="7" font-family="Liberation Sans" fill="#333">L</text></svg>
<svg class="s" style="left:1278px;top:379px;" width="16" height="16" viewBox="0 0 16 16"><path d="M1 15 L5 10 L9 12 L15 5" fill="none" stroke="#333" stroke-width="1.3"/><circle cx="1.5" cy="14.5" r="1.3" fill="#333"/><circle cx="9" cy="12" r="1.3" fill="#333"/><circle cx="15" cy="5" r="1.3" fill="#333"/><text x="5" y="6" font-size="5.5" font-family="Liberation Sans" fill="#333">-10</text></svg>
<svg class="s" style="left:1258px;top:397px;" width="16" height="16" viewBox="0 0 16 16"><g fill="none" stroke="#5a9ad8" stroke-width="1"><path d="M7 1.5 H16 L10.5 6.5 H1.5Z"/><path d="M13.5 5.5 H16 L10.5 10.5 H1.5 L4.5 7.5"/><path d="M13.5 9.5 H16 L10.5 15 H1.5 L4.5 12"/></g></svg>
<svg class="s" style="left:1238px;top:415px;" width="16" height="16" viewBox="0 0 16 16"><path d="M2 15 L12 3 L15 5 L9 15Z" fill="#555"/><path d="M5 11 L15 11 L14 15 L8 15Z" fill="#777"/><path d="M9 6 L13 9" stroke="#fff" stroke-width="1"/></svg>
<svg class="s" style="left:1238px;top:433px;" width="16" height="16" viewBox="0 0 16 16"><rect x="2.5" y="1.5" width="11" height="14" rx="1" fill="#fff" stroke="#999"/><rect x="4" y="3" width="8" height="2.5" fill="#5a9ad8"/><path d="M4.5 8 H6 M7.5 8 H9 M10.5 8 H12 M4.5 10.5 H6 M7.5 10.5 H9 M10.5 10.5 H12 M4.5 13 H6 M7.5 13 H9 M10.5 13 H12" stroke="#999" stroke-width="1.3"/></svg>
<svg class="s" style="left:1258px;top:451px;" width="16" height="16" viewBox="0 0 16 16"><rect x="0" y="0" width="16" height="16" rx="2" fill="#0022dd"/><path d="M8 2 L13 8 H10 V14 H6 V8 H3Z" fill="#fff"/></svg>
<svg class="s" style="left:1258px;top:469px;" width="16" height="16" viewBox="0 0 16 16"><path d="M5 16 L7 6 H9 L11 16Z M1 16 L5 6 M15 16 L11 6" fill="#222" stroke="#222" stroke-width="1.2"/><path d="M3 5 H13" stroke="#222" stroke-width="1.4"/><circle cx="8" cy="2.5" r="1.5" fill="#222"/><path d="M8 9 V15" stroke="#fff" stroke-width="0.8"/></svg>
<svg class="s" style="left:1258px;top:487px;" width="16" height="16" viewBox="0 0 16 16"><path d="M0 16 V9 H3 V11 H5 V6 H7 V1 H9 V6 H11 V10 H13 V8 H16 V16Z" fill="#555"/></svg>
<svg class="s" style="left:1238px;top:523px;" width="16" height="16" viewBox="0 0 16 16"><path d="M1.5 5.5 H11 L14.5 9 V14.5 H1.5Z" fill="#fff" stroke="#999"/><path d="M5 11 H13" stroke="#bbb"/></svg>
<svg class="s" style="left:1238px;top:541px;" width="16" height="16" viewBox="0 0 16 16"><rect x="0" y="0" width="16" height="16" fill="#222"/><rect x="3" y="1" width="10" height="14" fill="#f5c060"/><path d="M3 1 Q8 8 3 15 M13 1 Q8 8 13 15" fill="none" stroke="#fff" stroke-width="1.4"/><rect x="0.8" y="1.5" width="1.4" height="1.6" fill="#fff"/><rect x="13.8" y="1.5" width="1.4" height="1.6" fill="#fff"/><rect x="0.8" y="5" width="1.4" height="1.6" fill="#fff"/><rect x="13.8" y="5" width="1.4" height="1.6" fill="#fff"/><rect x="0.8" y="8.5" width="1.4" height="1.6" fill="#fff"/><rect x="13.8" y="8.5" width="1.4" height="1.6" fill="#fff"/><rect x="0.8" y="12" width="1.4" height="1.6" fill="#fff"/><rect x="13.8" y="12" width="1.4" height="1.6" fill="#fff"/></svg>
<svg class="s" style="left:1238px;top:559px;" width="16" height="16" viewBox="0 0 16 16"><rect x="0.5" y="0.5" width="15" height="15" fill="#bfe0f8" stroke="#888"/><path d="M1 13 L6 6 L10 11 L12 9 L15 13Z" fill="#5a9ad8"/><rect x="1" y="12.5" width="14" height="3" fill="#66bb22"/><circle cx="12" cy="3.5" r="1.5" fill="#ffaa33"/></svg>
<div class="r" style="left:1402px;top:272px;width:16px;height:16px;background:#fff;box-sizing:border-box;border:1px solid #333;"></div>
<div class="r" style="left:1402px;top:380px;width:16px;height:16px;background:#fff;box-sizing:border-box;border:1px solid #333;"></div>
<svg class="s" style="left:1402px;top:380px;" width="16" height="16" viewBox="0 0 16 16"><path d="M3.5 8 L6.5 11.5 L12.5 4" fill="none" stroke="#444" stroke-width="1.4"/></svg>
<div class="r" style="left:1569px;top:255px;width:21px;height:15px;background:#fff;box-sizing:border-box;border:1px solid #c8c8c8;"></div>
<svg class="s" style="left:1569px;top:255px;" width="21" height="15" viewBox="0 0 21 15"><path d="M5 9 Q9 3 15 8" fill="none" stroke="#8a8ae0" stroke-width="1.6"/><path d="M4 5 L5 10 L9 8Z" fill="#8a8ae0"/></svg>
<div class="r" style="left:1534px;top:290px;width:56px;height:16px;background:#d4d4d4;box-sizing:border-box;border:1px solid #9a9a9a;"></div>
<div class="t" style="left:1537px;top:292.50px;font-size:11px;line-height:11px;color:#111;">Замкнуть</div>
<div class="r" style="left:1569px;top:344px;width:21px;height:16px;background:#d4d4d4;box-sizing:border-box;border:1px solid #a8a8a8;"></div>
<svg class="s" style="left:1569px;top:344px;" width="21" height="16" viewBox="0 0 21 16"><path d="M7.5 7 V5 A3 3 0 0 1 13.5 5 V7" fill="none" stroke="#ffcc55" stroke-width="1.4"/><rect x="6" y="7" width="9" height="7" fill="#ffcc55"/><path d="M10.5 9 V12" stroke="#fff"/></svg>
<div class="r" style="left:1569px;top:416px;width:21px;height:16px;background:#fff;box-sizing:border-box;border:1px solid #c8c8c8;"></div>
<svg class="s" style="left:1569px;top:416px;" width="21" height="16" viewBox="0 0 21 16"><path d="M10.5 3 V13 M5.5 8 H15.5" stroke="#8ea040" stroke-width="2.4"/></svg>
<div class="r" style="left:1569px;top:434px;width:21px;height:16px;background:#d4d4d4;box-sizing:border-box;border:1px solid #a8a8a8;"></div>
<svg class="s" style="left:1569px;top:434px;" width="21" height="16" viewBox="0 0 21 16"><path d="M6 12 L14 4" stroke="#3366cc" stroke-width="1.8"/></svg>
<div class="r" style="left:1569px;top:506px;width:21px;height:16px;background:#d4d4d4;box-sizing:border-box;border:1px solid #a8a8a8;"></div>
<svg class="s" style="left:1569px;top:506px;" width="21" height="16" viewBox="0 0 21 16"><path d="M12 2 L7 9 H10 L8 14 L14 7 H11Z" fill="#ee2222"/></svg>
<div class="r" style="left:1569px;top:524px;width:21px;height:16px;background:#d4d4d4;box-sizing:border-box;border:1px solid #a8a8a8;"></div>
<svg class="s" style="left:1569px;top:524px;" width="21" height="16" viewBox="0 0 21 16"><path d="M12 2 L7 9 H10 L8 14 L14 7 H11Z" fill="#ee2222"/></svg>
<div class="r" style="left:1546px;top:542px;width:21px;height:16px;background:#d4d4d4;box-sizing:border-box;border:1px solid #a8a8a8;"></div>
<svg class="s" style="left:1546px;top:542px;" width="21" height="16" viewBox="0 0 21 16"><rect x="4" y="6" width="7" height="4.5" rx="2.2" fill="none" stroke="#5a78cc" stroke-width="1.3"/><rect x="10" y="6" width="7" height="4.5" rx="2.2" fill="none" stroke="#5a78cc" stroke-width="1.3"/></svg>
<div class="r" style="left:1569px;top:542px;width:21px;height:16px;background:#d4d4d4;box-sizing:border-box;border:1px solid #a8a8a8;"></div>
<svg class="s" style="left:1569px;top:542px;" width="21" height="16" viewBox="0 0 21 16"><path d="M10.5 3 V13 M5.5 8 H15.5" stroke="#55aa22" stroke-width="2.6"/></svg>
<div class="r" style="left:1214px;top:841px;width:93px;height:22px;background:#fff;"></div>
<div class="r" style="left:1307px;top:841px;width:71px;height:22px;background:#fff;box-sizing:border-box;border:1px solid #d8d8d8;border-bottom:none;border-left:none;border-radius:0 0 3px 0;"></div>
<div class="r" style="left:1214px;top:863px;width:93px;height:3px;background:#0033cc;"></div>
<div class="r" style="left:1209px;top:868px;width:389px;height:1px;background:#d0d0d0;"></div>
<svg class="s" style="left:1226px;top:845px;" width="15" height="16" viewBox="0 0 15 16"><rect x="0.5" y="1.5" width="14" height="14" fill="#fff" stroke="#999"/><rect x="0" y="0" width="15" height="1.5" fill="#6a9ad8"/><path d="M4 5 H11 M4 8 H11 M4 11 H11" stroke="#6688bb" stroke-dasharray="2 1"/></svg>
<div class="t" style="left:1247px;top:847.50px;font-size:11px;line-height:11px;color:#1a1a3a;">Свойства</div>
<svg class="s" style="left:1311px;top:843px;" width="13" height="16" viewBox="0 0 13 16"><rect x="0" y="0" width="13" height="15" fill="#5b8fd0"/><rect x="0" y="0" width="2" height="15" fill="#3a6ab0"/><rect x="5" y="2" width="6" height="2" fill="#e02020"/></svg>
<div class="t" style="left:1331px;top:846.50px;font-size:11px;line-height:11px;color:#1a1a3a;">Журнал</div>
<svg class="s" style="left:9px;top:874px;" width="16" height="17" viewBox="0 0 16 17"><path d="M3 5 H8 L11 16 H0Z" fill="#9a9a9a"/><rect x="0" y="15" width="12" height="2" fill="#333"/><path d="M5 7 V8 M5 10 V12" stroke="#fff" stroke-width="1.4"/><path d="M12 0 L15.5 6 H8.5Z" fill="none" stroke="#e33" stroke-width="1.1"/><path d="M12 6 V16" stroke="#333"/></svg>
<div class="t" style="left:31px;top:878.00px;font-size:12px;line-height:12px;color:#262626;">Проектное решение</div>
<svg class="s" style="left:148px;top:882px;" width="8" height="5" viewBox="0 0 8 5"><path d="M1 1 L4 4 L7 1" fill="none" stroke="#333" stroke-width="1"/></svg>
<div class="r" style="left:160px;top:873px;width:1px;height:22px;background:#d0d0d0;"></div>
<div class="t" style="left:168px;top:878.00px;font-size:12px;line-height:12px;color:#262626;">Активный километр:</div>
<div class="r" style="left:288px;top:872px;width:80px;height:24px;background:#fff;box-sizing:border-box;border:1px solid #d6d6d6;border-radius:3px;"></div>
<div class="t" style="left:292px;top:878.00px;font-size:12px;line-height:12px;color:#262626;">171,038</div>
<svg class="s" style="left:351px;top:874px;" width="10" height="19" viewBox="0 0 10 19"><path d="M1 6 L5 2 L9 6 M1 13 L5 17 L9 13" fill="none" stroke="#333" stroke-width="1.1"/></svg>
<div class="r" style="left:372px;top:873px;width:1px;height:22px;background:#d0d0d0;"></div>
<div class="t" style="left:379px;top:878.00px;font-size:12px;line-height:12px;color:#262626;">Масштаб:</div>
<div class="r" style="left:439px;top:872px;width:99px;height:24px;background:#fff;box-sizing:border-box;border:1px solid #d6d6d6;border-radius:3px;"></div>
<div class="t" style="left:444px;top:878.00px;font-size:12px;line-height:12px;color:#262626;">1:538,8</div>
<svg class="s" style="left:507px;top:874px;" width="10" height="19" viewBox="0 0 10 19"><path d="M1 6 L5 2 L9 6 M1 13 L5 17 L9 13" fill="none" stroke="#333" stroke-width="1.1"/></svg>
<svg class="s" style="left:523px;top:882px;" width="9.0" height="5.5" viewBox="0 0 9.0 5.5"><path d="M1 1 L4.5 4.5 L8.0 1" fill="none" stroke="#333" stroke-width="1"/></svg>
<div class="r" style="left:541px;top:873px;width:1px;height:22px;background:#d0d0d0;"></div>
<div class="t" style="left:548px;top:879.45px;font-size:11.1px;line-height:11.1px;color:#1a1a1a;">X = 264,6 мм; Y = 209,2 мм; Широта = 55,73388°; Долгота = 57,89969°; Километр = 170,909 км; Смещение = -42,36 м</div>
<svg class="s" style="left:1585px;top:886px;" width="8" height="8" viewBox="0 0 8 8"><rect x="0" y="0" width="2" height="2" fill="#999"/><rect x="0" y="5" width="2" height="2" fill="#999"/><rect x="5" y="0" width="2" height="2" fill="#999"/><rect x="5" y="5" width="2" height="2" fill="#999"/></svg>
</body></html>
